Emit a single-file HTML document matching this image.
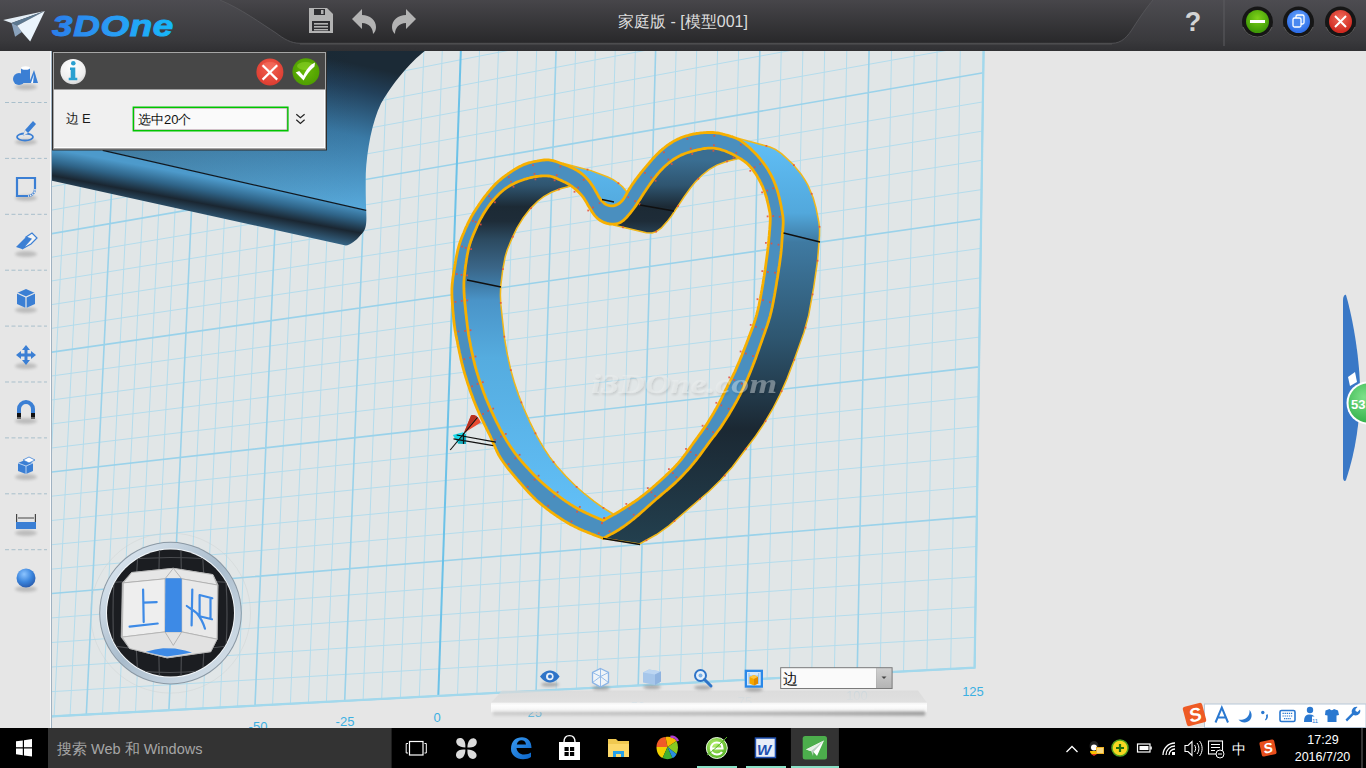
<!DOCTYPE html>
<html><head><meta charset="utf-8">
<style>
*{margin:0;padding:0;box-sizing:border-box}
html,body{width:1366px;height:768px;overflow:hidden;background:#e6e6e6;font-family:"Liberation Sans",sans-serif}
.abs{position:absolute;left:0;top:0;display:block}
</style></head><body>

<svg class="abs" width="1366" height="768" viewBox="0 0 1366 768">
<defs>
  <clipPath id="vp"><rect x="52" y="50" width="1314" height="678"/></clipPath>
  <path id="ho" d="M603.1 538.4 601.7 537.8 600.3 537.3 598.9 536.7 597.5 536.2 596.1 535.7 594.7 535.1 593.3 534.6 591.9 534.0 590.5 533.5 589.1 532.9 587.7 532.4 586.3 531.8 584.9 531.2 583.5 530.7 582.2 530.1 580.8 529.5 579.4 528.9 578.0 528.2 576.7 527.6 575.3 526.9 574.0 526.3 572.6 525.6 571.3 524.9 570.0 524.2 568.7 523.4 567.4 522.7 566.1 521.9 564.8 521.1 563.5 520.4 562.3 519.6 561.0 518.8 559.7 517.9 558.5 517.1 557.2 516.3 556.0 515.4 554.7 514.6 553.5 513.7 552.3 512.8 551.1 512.0 549.9 511.1 548.7 510.2 547.5 509.3 546.3 508.4 545.1 507.4 543.9 506.5 542.7 505.6 541.6 504.6 540.4 503.6 539.3 502.7 538.1 501.7 537.0 500.7 535.9 499.7 534.8 498.6 533.7 497.6 532.7 496.5 531.6 495.5 530.6 494.4 529.5 493.3 528.5 492.2 527.5 491.1 526.5 490.0 525.4 488.9 524.5 487.8 523.5 486.6 522.5 485.5 521.5 484.4 520.5 483.2 519.5 482.1 518.6 481.0 517.6 479.8 516.6 478.7 515.6 477.5 514.6 476.4 513.7 475.2 512.7 474.1 511.7 472.9 510.8 471.8 509.8 470.6 508.9 469.5 507.9 468.3 507.0 467.1 506.1 465.9 505.2 464.7 504.3 463.5 503.4 462.3 502.6 461.0 501.7 459.8 500.9 458.5 500.1 457.3 499.4 456.0 498.6 454.7 497.9 453.3 497.2 452.0 496.6 450.6 496.0 449.3 495.4 447.9 494.8 446.5 494.2 445.1 493.6 443.8 493.0 442.4 492.4 441.0 491.8 439.6 491.2 438.3 490.6 436.9 489.9 435.5 489.3 434.2 488.6 432.8 488.0 431.5 487.3 430.1 486.6 428.8 486.0 427.4 485.3 426.1 484.6 424.7 484.0 423.4 483.3 422.0 482.7 420.7 482.0 419.3 481.4 418.0 480.7 416.6 480.1 415.3 479.4 413.9 478.8 412.5 478.2 411.2 477.6 409.8 477.0 408.4 476.4 407.0 475.8 405.6 475.3 404.2 474.7 402.8 474.2 401.4 473.6 400.0 473.1 398.6 472.6 397.2 472.1 395.8 471.5 394.4 471.0 393.0 470.5 391.6 470.0 390.2 469.5 388.7 469.1 387.3 468.6 385.9 468.1 384.5 467.6 383.0 467.2 381.6 466.7 380.2 466.3 378.7 465.8 377.3 465.4 375.9 464.9 374.4 464.5 373.0 464.1 371.5 463.7 370.1 463.3 368.6 462.9 367.2 462.5 365.7 462.2 364.3 461.8 362.8 461.5 361.4 461.1 359.9 460.8 358.4 460.5 357.0 460.2 355.5 459.9 354.0 459.5 352.6 459.2 351.1 458.9 349.6 458.6 348.1 458.3 346.7 458.0 345.2 457.7 343.7 457.5 342.2 457.2 340.8 456.8 339.3 456.5 337.8 456.2 336.4 455.9 334.9 455.7 333.4 455.4 331.9 455.1 330.5 454.9 329.0 454.7 327.5 454.5 326.0 454.3 324.5 454.1 323.0 453.9 321.5 453.8 320.0 453.6 318.5 453.5 317.0 453.3 315.5 453.2 314.0 453.1 312.5 452.9 311.1 452.8 309.6 452.7 308.1 452.6 306.6 452.5 305.1 452.4 303.6 452.3 302.1 452.2 300.6 452.1 299.1 452.0 297.6 452.0 296.1 451.9 294.6 451.9 293.1 451.9 291.6 451.9 290.1 451.9 288.6 452.0 287.1 452.1 285.6 452.2 284.1 452.4 282.6 452.6 281.1 452.7 279.6 452.9 278.1 453.1 276.6 453.4 275.1 453.6 273.6 453.8 272.1 454.0 270.7 454.3 269.2 454.5 267.7 454.8 266.2 455.0 264.7 455.3 263.2 455.5 261.8 455.8 260.3 456.0 258.8 456.3 257.3 456.6 255.9 456.9 254.4 457.2 252.9 457.5 251.4 457.9 250.0 458.2 248.5 458.6 247.1 459.0 245.6 459.4 244.2 459.9 242.8 460.4 241.3 460.9 239.9 461.4 238.5 462.0 237.1 462.5 235.7 463.1 234.3 463.7 233.0 464.3 231.6 464.8 230.2 465.4 228.8 466.0 227.4 466.7 226.1 467.3 224.7 467.9 223.3 468.6 222.0 469.3 220.6 470.0 219.3 470.7 218.0 471.4 216.7 472.2 215.4 472.9 214.1 473.7 212.8 474.5 211.5 475.3 210.3 476.1 209.0 476.9 207.7 477.8 206.5 478.6 205.2 479.4 204.0 480.3 202.8 481.2 201.5 482.0 200.3 482.9 199.1 483.8 197.9 484.7 196.7 485.6 195.5 486.6 194.3 487.5 193.1 488.5 192.0 489.4 190.8 490.4 189.7 491.4 188.5 492.4 187.4 493.4 186.3 494.4 185.2 495.5 184.1 496.5 183.1 497.6 182.1 498.7 181.0 499.9 180.1 501.0 179.1 502.2 178.1 503.4 177.2 504.6 176.3 505.8 175.4 507.0 174.6 508.2 173.7 509.5 172.8 510.7 172.0 512.0 171.2 513.2 170.3 514.5 169.5 515.8 168.8 517.1 168.0 518.4 167.2 519.7 166.5 521.0 165.9 522.4 165.2 523.8 164.6 525.1 164.1 526.6 163.6 528.0 163.1 529.4 162.7 530.9 162.4 532.4 162.0 533.8 161.7 535.3 161.4 536.8 161.2 538.3 160.9 539.7 160.6 541.2 160.4 542.7 160.2 544.2 160.0 545.7 159.9 547.2 159.9 548.6 159.9 550.1 160.1 551.6 160.3 553.0 160.7 554.5 161.1 555.9 161.5 557.3 162.0 558.7 162.5 560.1 163.1 561.6 163.6 563.0 164.1 564.4 164.7 565.8 165.2 567.2 165.8 568.5 166.3 569.9 166.9 571.3 167.5 572.7 168.1 574.0 168.8 575.3 169.5 576.7 170.2 577.9 171.0 579.2 171.8 580.4 172.7 581.6 173.6 582.8 174.5 583.9 175.5 585.0 176.5 586.1 177.6 587.1 178.7 588.1 179.8 589.0 180.9 590.0 182.1 590.8 183.3 591.7 184.6 592.5 185.8 593.4 187.1 594.1 188.4 594.9 189.7 595.6 191.0 596.4 192.3 597.1 193.6 597.8 194.9 598.5 196.2 599.3 197.5 600.1 198.8 601.0 200.0 602.0 201.1 603.0 202.1 604.1 203.1 605.3 204.0 606.6 204.7 607.9 205.3 609.3 205.7 610.7 205.9 612.2 205.9 613.6 205.8 615.0 205.4 616.4 204.9 617.7 204.3 619.0 203.5 620.1 202.6 621.2 201.7 622.3 200.6 623.2 199.4 624.0 198.2 624.8 196.9 625.5 195.6 626.3 194.3 627.0 193.0 627.7 191.7 628.5 190.4 629.3 189.1 630.1 187.9 630.9 186.6 631.7 185.3 632.5 184.1 633.4 182.9 634.3 181.6 635.1 180.4 636.0 179.2 636.9 178.0 637.8 176.8 638.7 175.6 639.7 174.4 640.6 173.2 641.5 172.1 642.5 170.9 643.5 169.7 644.4 168.6 645.4 167.4 646.3 166.3 647.3 165.1 648.3 164.0 649.3 162.8 650.2 161.7 651.2 160.6 652.2 159.4 653.2 158.3 654.2 157.2 655.2 156.1 656.3 155.0 657.3 154.0 658.4 152.9 659.5 151.9 660.6 150.9 661.8 149.9 662.9 148.9 664.1 148.0 665.2 147.0 666.4 146.1 667.6 145.2 668.9 144.3 670.1 143.5 671.4 142.7 672.6 141.9 673.9 141.1 675.2 140.4 676.6 139.7 677.9 139.1 679.3 138.5 680.7 137.9 682.1 137.3 683.5 136.8 684.9 136.3 686.3 135.9 687.8 135.5 689.2 135.1 690.7 134.7 692.1 134.3 693.6 134.0 695.1 133.8 696.6 133.5 698.1 133.3 699.5 133.1 701.0 132.9 702.5 132.8 704.0 132.7 705.5 132.6 707.0 132.5 708.5 132.5 710.0 132.4 711.5 132.5 713.0 132.5 714.5 132.6 716.0 132.8 717.5 133.0 719.0 133.2 720.4 133.5 721.9 133.9 723.3 134.3 724.8 134.7 726.2 135.0 727.7 135.4 729.1 135.8 730.6 136.3 732.0 136.7 733.4 137.2 734.8 137.7 736.2 138.3 737.6 138.9 738.9 139.6 740.2 140.4 741.4 141.2 742.7 142.1 743.9 143.0 745.0 143.9 746.2 144.8 747.4 145.8 748.5 146.8 749.6 147.8 750.7 148.8 751.8 149.9 752.9 150.9 753.9 152.0 755.0 153.0 756.0 154.1 757.1 155.2 758.1 156.3 759.0 157.5 760.0 158.6 760.9 159.8 761.9 161.0 762.8 162.2 763.7 163.4 764.6 164.6 765.4 165.8 766.3 167.1 767.1 168.3 767.9 169.6 768.7 170.9 769.4 172.2 770.2 173.5 770.9 174.8 771.6 176.1 772.2 177.5 772.9 178.8 773.5 180.2 774.1 181.6 774.6 183.0 775.2 184.4 775.7 185.8 776.2 187.2 776.7 188.6 777.2 190.0 777.6 191.5 778.0 192.9 778.5 194.4 778.8 195.8 779.2 197.3 779.5 198.7 779.9 200.2 780.2 201.7 780.5 203.1 780.8 204.6 781.1 206.1 781.4 207.6 781.6 209.0 781.9 210.5 782.2 212.0 782.4 213.5 782.7 215.0 782.9 216.4 783.0 217.9 783.1 219.4 783.2 220.9 783.2 222.4 783.2 223.9 783.1 225.4 783.0 226.9 782.9 228.4 782.8 229.9 782.7 231.4 782.5 232.9 782.4 234.4 782.3 235.9 782.2 237.4 782.1 238.9 782.0 240.4 781.9 241.9 781.8 243.4 781.7 244.9 781.6 246.4 781.5 247.9 781.3 249.4 781.2 250.9 781.0 252.4 780.9 253.9 780.7 255.4 780.5 256.9 780.3 258.4 780.1 259.8 779.9 261.3 779.7 262.8 779.5 264.3 779.3 265.8 779.0 267.3 778.8 268.8 778.6 270.3 778.4 271.7 778.1 273.2 777.9 274.7 777.7 276.2 777.5 277.7 777.2 279.2 777.0 280.6 776.7 282.1 776.5 283.6 776.3 285.1 776.0 286.6 775.8 288.1 775.5 289.5 775.2 291.0 775.0 292.5 774.7 294.0 774.5 295.5 774.2 296.9 773.9 298.4 773.6 299.9 773.4 301.4 773.1 302.8 772.8 304.3 772.5 305.8 772.2 307.3 771.8 308.7 771.5 310.2 771.2 311.7 770.8 313.1 770.4 314.6 770.1 316.0 769.7 317.5 769.2 318.9 768.8 320.4 768.4 321.8 767.9 323.2 767.5 324.7 767.0 326.1 766.5 327.5 766.0 328.9 765.5 330.3 765.0 331.8 764.5 333.2 764.0 334.6 763.5 336.0 763.0 337.4 762.5 338.8 762.0 340.3 761.5 341.7 761.0 343.1 760.5 344.5 760.0 345.9 759.5 347.4 759.0 348.8 758.5 350.2 758.0 351.6 757.5 353.0 757.0 354.4 756.5 355.8 756.0 357.2 755.5 358.7 754.9 360.1 754.4 361.5 753.9 362.9 753.3 364.3 752.8 365.7 752.2 367.1 751.7 368.5 751.1 369.9 750.6 371.3 750.0 372.7 749.4 374.1 748.9 375.4 748.3 376.8 747.7 378.2 747.1 379.6 746.5 381.0 745.9 382.3 745.3 383.7 744.6 385.1 744.0 386.4 743.4 387.8 742.7 389.2 742.1 390.5 741.4 391.9 740.8 393.2 740.1 394.6 739.4 395.9 738.7 397.2 738.0 398.6 737.3 399.9 736.6 401.2 735.9 402.5 735.1 403.8 734.4 405.1 733.7 406.4 732.9 407.7 732.1 409.0 731.4 410.3 730.6 411.6 729.8 412.9 729.1 414.2 728.3 415.5 727.5 416.8 726.7 418.0 725.9 419.3 725.1 420.6 724.3 421.8 723.5 423.1 722.6 424.4 721.8 425.6 721.0 426.9 720.1 428.1 719.2 429.3 718.3 430.5 717.4 431.7 716.5 432.9 715.6 434.1 714.7 435.3 713.8 436.5 712.8 437.7 711.9 438.8 711.0 440.0 710.1 441.2 709.2 442.4 708.3 443.7 707.4 444.9 706.5 446.1 705.7 447.3 704.8 448.5 703.9 449.7 703.0 450.9 702.1 452.2 701.2 453.4 700.3 454.6 699.4 455.8 698.5 457.0 697.6 458.2 696.7 459.4 695.8 460.5 694.8 461.7 693.9 462.9 692.9 464.0 691.9 465.2 691.0 466.3 690.0 467.5 689.0 468.6 688.0 469.7 687.0 470.8 686.0 471.9 684.9 473.0 683.9 474.1 682.9 475.2 681.8 476.3 680.8 477.4 679.7 478.4 678.6 479.5 677.6 480.5 676.5 481.6 675.4 482.6 674.3 483.6 673.2 484.6 672.1 485.6 670.9 486.6 669.8 487.6 668.7 488.6 667.5 489.6 666.4 490.6 665.2 491.5 664.1 492.5 662.9 493.5 661.8 494.4 660.7 495.4 659.5 496.4 658.4 497.4 657.2 498.3 656.1 499.3 655.0 500.3 653.8 501.3 652.7 502.3 651.6 503.3 650.5 504.3 649.3 505.3 648.2 506.3 647.1 507.3 646.0 508.3 644.9 509.3 643.7 510.3 642.6 511.3 641.5 512.3 640.4 513.3 639.2 514.3 638.1 515.3 636.9 516.2 635.8 517.2 634.6 518.1 633.5 519.1 632.3 520.0 631.1 521.0 629.9 521.9 628.7 522.8 627.5 523.7 626.3 524.6 625.1 525.5 623.9 526.4 622.6 527.2 621.4 528.0 620.1 528.9 618.9 529.7 617.6 530.4 616.3 531.2 615.0 532.0 613.7 532.7 612.4 533.4 611.0 534.1 609.7 534.9 608.4 535.6 607.1 536.3 605.8 537.0 604.4 537.7 603.1 538.4Z"/>
  <path id="hi" d="M603.1 520.5 601.7 519.9 600.4 519.3 599.0 518.7 597.6 518.1 596.2 517.5 594.8 516.9 593.5 516.3 592.1 515.7 590.7 515.1 589.4 514.4 588.0 513.8 586.6 513.2 585.3 512.5 583.9 511.9 582.6 511.2 581.2 510.6 579.9 509.9 578.6 509.2 577.3 508.4 575.9 507.7 574.7 506.9 573.4 506.2 572.1 505.4 570.8 504.6 569.6 503.8 568.3 502.9 567.0 502.1 565.8 501.3 564.6 500.4 563.3 499.6 562.1 498.7 560.9 497.8 559.7 496.9 558.5 496.0 557.3 495.1 556.1 494.2 554.9 493.3 553.7 492.4 552.5 491.5 551.3 490.5 550.2 489.6 549.0 488.6 547.9 487.7 546.7 486.7 545.6 485.7 544.4 484.7 543.3 483.7 542.2 482.7 541.1 481.7 540.0 480.7 538.9 479.7 537.8 478.6 536.7 477.6 535.7 476.5 534.6 475.4 533.6 474.4 532.5 473.3 531.5 472.2 530.4 471.1 529.4 470.0 528.4 468.9 527.4 467.8 526.4 466.7 525.4 465.6 524.4 464.5 523.4 463.3 522.4 462.2 521.4 461.1 520.4 459.9 519.5 458.8 518.5 457.6 517.6 456.4 516.7 455.2 515.7 454.1 514.8 452.9 513.9 451.6 513.1 450.4 512.2 449.2 511.4 448.0 510.5 446.7 509.7 445.5 508.9 444.2 508.1 442.9 507.3 441.7 506.5 440.4 505.7 439.1 505.0 437.8 504.2 436.5 503.5 435.2 502.8 433.9 502.1 432.5 501.3 431.2 500.6 429.9 499.9 428.6 499.2 427.2 498.6 425.9 497.9 424.5 497.2 423.2 496.5 421.9 495.9 420.5 495.2 419.2 494.6 417.8 493.9 416.5 493.3 415.1 492.7 413.7 492.0 412.4 491.4 411.0 490.8 409.6 490.2 408.3 489.6 406.9 489.0 405.5 488.4 404.1 487.8 402.7 487.2 401.3 486.7 400.0 486.1 398.6 485.5 397.2 485.0 395.8 484.5 394.4 483.9 393.0 483.4 391.6 482.9 390.1 482.4 388.7 481.9 387.3 481.4 385.9 480.9 384.5 480.4 383.1 479.9 381.6 479.4 380.2 479.0 378.8 478.5 377.4 478.1 375.9 477.6 374.5 477.2 373.1 476.7 371.6 476.3 370.2 475.9 368.7 475.5 367.3 475.1 365.8 474.7 364.4 474.4 362.9 474.0 361.5 473.7 360.0 473.3 358.5 473.0 357.1 472.7 355.6 472.4 354.1 472.0 352.7 471.7 351.2 471.4 349.7 471.1 348.3 470.8 346.8 470.5 345.3 470.3 343.8 470.0 342.4 469.7 340.9 469.4 339.4 469.1 337.9 468.9 336.5 468.6 335.0 468.4 333.5 468.2 332.0 468.0 330.5 467.8 329.0 467.6 327.5 467.4 326.0 467.2 324.6 467.1 323.1 466.9 321.6 466.7 320.1 466.5 318.6 466.4 317.1 466.2 315.6 466.0 314.1 465.8 312.6 465.7 311.1 465.5 309.6 465.4 308.1 465.2 306.6 465.1 305.1 464.9 303.6 464.8 302.2 464.7 300.7 464.6 299.2 464.4 297.7 464.3 296.2 464.2 294.7 464.1 293.2 464.0 291.7 464.0 290.2 463.9 288.7 463.9 287.2 463.9 285.7 463.9 284.2 463.9 282.7 464.0 281.2 464.1 279.7 464.2 278.2 464.3 276.7 464.5 275.2 464.6 273.7 464.8 272.2 465.0 270.7 465.2 269.2 465.3 267.7 465.5 266.2 465.7 264.7 466.0 263.3 466.2 261.8 466.4 260.3 466.6 258.8 466.9 257.3 467.1 255.8 467.4 254.4 467.7 252.9 468.0 251.4 468.3 249.9 468.6 248.5 469.0 247.0 469.4 245.6 469.8 244.1 470.3 242.7 470.7 241.3 471.3 239.9 471.8 238.5 472.4 237.1 472.9 235.7 473.5 234.3 474.1 232.9 474.7 231.5 475.3 230.2 475.9 228.8 476.5 227.4 477.1 226.0 477.7 224.7 478.4 223.3 479.0 222.0 479.7 220.6 480.4 219.3 481.1 218.0 481.9 216.7 482.6 215.4 483.4 214.1 484.2 212.8 485.0 211.5 485.8 210.3 486.6 209.0 487.5 207.8 488.3 206.5 489.2 205.3 490.1 204.1 491.0 202.9 492.0 201.8 492.9 200.6 493.9 199.5 494.9 198.4 495.9 197.2 496.9 196.2 498.0 195.1 499.0 194.0 500.1 193.0 501.2 192.0 502.4 191.0 503.5 190.0 504.7 189.1 505.9 188.2 507.2 187.4 508.4 186.6 509.7 185.8 511.0 185.1 512.3 184.4 513.7 183.7 515.0 183.0 516.4 182.4 517.8 181.8 519.2 181.2 520.6 180.7 522.0 180.2 523.4 179.7 524.8 179.2 526.2 178.8 527.7 178.3 529.1 178.0 530.6 177.6 532.0 177.3 533.5 177.0 535.0 176.7 536.5 176.5 538.0 176.3 539.5 176.1 541.0 176.0 542.5 175.9 543.9 175.9 545.4 175.9 546.9 175.9 548.4 176.0 549.9 176.2 551.4 176.5 552.8 176.9 554.2 177.4 555.6 177.9 557.0 178.5 558.3 179.2 559.7 179.8 561.1 180.4 562.4 181.0 563.8 181.7 565.1 182.3 566.5 183.0 567.8 183.7 569.1 184.5 570.3 185.3 571.6 186.2 572.8 187.0 573.9 188.0 575.1 188.9 576.3 189.9 577.4 190.9 578.5 191.9 579.5 193.0 580.6 194.1 581.5 195.2 582.5 196.3 583.4 197.5 584.2 198.8 585.0 200.0 585.8 201.3 586.6 202.6 587.3 203.9 588.0 205.2 588.8 206.5 589.6 207.8 590.4 209.1 591.2 210.4 592.0 211.6 592.8 212.9 593.7 214.1 594.6 215.3 595.5 216.4 596.6 217.5 597.6 218.5 598.8 219.4 600.0 220.3 601.3 221.1 602.6 221.8 604.0 222.4 605.4 222.9 606.8 223.4 608.2 223.7 609.7 224.0 611.2 224.2 612.6 224.2 614.1 224.2 615.6 224.0 617.0 223.7 618.4 223.3 619.8 222.7 621.1 222.0 622.3 221.2 623.5 220.3 624.6 219.3 625.7 218.2 626.7 217.2 627.7 216.0 628.7 214.9 629.6 213.8 630.6 212.6 631.5 211.4 632.5 210.2 633.4 209.0 634.3 207.8 635.1 206.6 636.0 205.4 636.8 204.1 637.6 202.9 638.4 201.6 639.2 200.3 640.1 199.1 640.9 197.8 641.7 196.6 642.5 195.3 643.3 194.0 644.1 192.8 645.0 191.5 645.8 190.3 646.6 189.0 647.5 187.8 648.3 186.5 649.2 185.3 650.0 184.1 650.9 182.8 651.8 181.6 652.7 180.4 653.6 179.2 654.5 178.0 655.4 176.8 656.3 175.6 657.2 174.5 658.2 173.3 659.2 172.2 660.2 171.0 661.2 169.9 662.2 168.9 663.3 167.8 664.4 166.8 665.5 165.8 666.6 164.8 667.8 163.8 668.9 162.8 670.1 161.9 671.3 161.0 672.5 160.1 673.7 159.3 675.0 158.5 676.3 157.7 677.6 156.9 678.9 156.2 680.3 155.6 681.6 154.9 683.0 154.4 684.4 153.8 685.8 153.3 687.2 152.8 688.6 152.3 690.1 151.9 691.5 151.5 693.0 151.1 694.4 150.7 695.9 150.3 697.3 149.9 698.8 149.6 700.3 149.3 701.7 149.0 703.2 148.7 704.7 148.5 706.2 148.3 707.7 148.2 709.2 148.1 710.7 148.1 712.2 148.1 713.6 148.2 715.1 148.4 716.6 148.6 718.1 148.9 719.5 149.2 721.0 149.6 722.4 150.1 723.8 150.5 725.3 151.0 726.7 151.6 728.0 152.2 729.4 152.8 730.8 153.4 732.1 154.0 733.5 154.7 734.8 155.4 736.1 156.2 737.4 156.9 738.7 157.7 740.0 158.4 741.3 159.2 742.5 160.1 743.7 160.9 745.0 161.8 746.1 162.7 747.3 163.7 748.4 164.7 749.4 165.8 750.4 166.9 751.4 168.0 752.4 169.2 753.3 170.4 754.1 171.6 755.0 172.8 755.8 174.1 756.6 175.3 757.4 176.6 758.1 177.9 758.9 179.2 759.6 180.5 760.3 181.9 761.0 183.2 761.6 184.6 762.3 185.9 762.9 187.3 763.4 188.7 764.0 190.1 764.5 191.5 765.0 192.9 765.5 194.3 765.9 195.8 766.4 197.2 766.8 198.6 767.1 200.1 767.5 201.6 767.8 203.0 768.2 204.5 768.5 206.0 768.8 207.4 769.1 208.9 769.4 210.4 769.7 211.8 770.0 213.3 770.1 214.8 770.2 216.3 770.3 217.8 770.3 219.3 770.2 220.8 770.2 222.3 770.1 223.8 770.0 225.3 769.9 226.7 769.8 228.2 769.7 229.7 769.5 231.2 769.4 232.7 769.3 234.2 769.2 235.7 769.0 237.2 768.9 238.7 768.8 240.2 768.6 241.7 768.5 243.2 768.3 244.7 768.2 246.2 768.0 247.7 767.8 249.2 767.7 250.7 767.5 252.2 767.3 253.7 767.1 255.2 766.9 256.6 766.7 258.1 766.5 259.6 766.3 261.1 766.1 262.6 765.9 264.1 765.7 265.6 765.5 267.1 765.3 268.5 765.1 270.0 764.8 271.5 764.6 273.0 764.4 274.5 764.2 276.0 763.9 277.5 763.7 278.9 763.4 280.4 763.2 281.9 763.0 283.4 762.7 284.9 762.5 286.4 762.2 287.8 762.0 289.3 761.7 290.8 761.4 292.3 761.2 293.7 760.9 295.2 760.6 296.7 760.4 298.2 760.1 299.7 759.8 301.1 759.5 302.6 759.2 304.1 758.9 305.5 758.5 307.0 758.2 308.5 757.9 309.9 757.5 311.4 757.1 312.8 756.8 314.3 756.4 315.7 756.0 317.2 755.5 318.6 755.1 320.1 754.6 321.5 754.2 322.9 753.7 324.3 753.2 325.8 752.7 327.2 752.1 328.6 751.6 330.0 751.1 331.4 750.5 332.8 750.0 334.2 749.5 335.6 748.9 337.0 748.4 338.4 747.9 339.8 747.3 341.2 746.8 342.6 746.3 344.0 745.7 345.4 745.2 346.8 744.6 348.2 744.1 349.6 743.5 351.0 743.0 352.4 742.4 353.8 741.9 355.2 741.3 356.6 740.7 358.0 740.1 359.4 739.6 360.8 739.0 362.1 738.4 363.5 737.8 364.9 737.2 366.3 736.6 367.7 736.0 369.0 735.4 370.4 734.8 371.8 734.1 373.1 733.5 374.5 732.8 375.9 732.2 377.2 731.5 378.5 730.8 379.9 730.1 381.2 729.4 382.5 728.7 383.9 728.0 385.2 727.4 386.5 726.7 387.9 726.0 389.2 725.3 390.6 724.7 391.9 724.0 393.3 723.3 394.6 722.7 396.0 722.0 397.3 721.4 398.7 720.7 400.0 720.0 401.3 719.3 402.7 718.6 404.0 717.9 405.3 717.2 406.6 716.5 408.0 715.7 409.3 715.0 410.6 714.2 411.9 713.5 413.2 712.7 414.5 712.0 415.8 711.2 417.0 710.4 418.3 709.6 419.6 708.8 420.9 708.0 422.2 707.2 423.4 706.4 424.7 705.6 425.9 704.7 427.2 703.9 428.4 703.0 429.7 702.1 430.9 701.3 432.1 700.4 433.3 699.5 434.5 698.6 435.7 697.7 437.0 696.8 438.2 696.0 439.4 695.1 440.6 694.2 441.8 693.3 443.0 692.5 444.3 691.6 445.5 690.7 446.7 689.9 447.9 689.0 449.2 688.1 450.4 687.2 451.6 686.4 452.8 685.5 454.0 684.6 455.2 683.7 456.4 682.7 457.6 681.8 458.8 680.9 460.0 679.9 461.1 678.9 462.3 678.0 463.4 676.9 464.5 675.9 465.6 674.9 466.7 673.9 467.8 672.8 468.9 671.7 469.9 670.7 471.0 669.6 472.0 668.5 473.1 667.4 474.1 666.3 475.1 665.2 476.2 664.1 477.2 663.0 478.2 661.9 479.2 660.8 480.2 659.7 481.2 658.6 482.2 657.5 483.2 656.3 484.2 655.2 485.2 654.1 486.2 652.9 487.2 651.8 488.2 650.7 489.2 649.5 490.1 648.4 491.1 647.2 492.0 646.0 493.0 644.9 494.0 643.7 494.9 642.5 495.8 641.3 496.7 640.1 497.6 638.9 498.5 637.7 499.4 636.5 500.3 635.2 501.1 634.0 502.0 632.7 502.8 631.5 503.6 630.2 504.5 629.0 505.3 627.7 506.1 626.5 506.9 625.2 507.7 624.0 508.6 622.7 509.3 621.4 510.1 620.1 510.9 618.8 511.7 617.5 512.4 616.2 513.2 614.9 513.9 613.6 514.6 612.3 515.4 611.0 516.1 609.7 516.8 608.4 517.6 607.0 518.3 605.7 519.0 604.4 519.8 603.1 520.5Z"/>
  <clipPath id="noTip"><path d="M0 0 H1366 V768 H0 Z M560 525 L641 546 L641 560 L560 560 Z" clip-rule="evenodd"/></clipPath>
  <clipPath id="cpHole"><use href="#hi"/></clipPath>


  <linearGradient id="gOut" gradientUnits="userSpaceOnUse" x1="0" y1="130" x2="0" y2="545">
    <stop offset="0" stop-color="#62c2fa"/>
    <stop offset="0.2" stop-color="#52a8dc"/>
    <stop offset="0.27" stop-color="#3f7aa2"/>
    <stop offset="0.5" stop-color="#2e5670"/>
    <stop offset="0.72" stop-color="#1b2833"/>
    <stop offset="1" stop-color="#23404f"/>
  </linearGradient>
  <linearGradient id="gIn" gradientUnits="userSpaceOnUse" x1="0" y1="160" x2="0" y2="520">
    <stop offset="0" stop-color="#3a6e92"/>
    <stop offset="0.07" stop-color="#2f5570"/>
    <stop offset="0.13" stop-color="#1c2a35"/>
    <stop offset="0.17" stop-color="#1e2c38"/>
    <stop offset="0.22" stop-color="#2c4a60"/>
    <stop offset="0.3" stop-color="#3a6688"/>
    <stop offset="0.34" stop-color="#3e78a2"/>
    <stop offset="0.39" stop-color="#4a94c8"/>
    <stop offset="0.55" stop-color="#55acdf"/>
    <stop offset="1" stop-color="#62c0f8"/>
  </linearGradient>
  <linearGradient id="gTopObj" gradientUnits="userSpaceOnUse" x1="343" y1="206" x2="374" y2="68">
    <stop offset="0" stop-color="#58aadc"/>
    <stop offset="0.5" stop-color="#3a7aa6"/>
    <stop offset="0.83" stop-color="#22405a"/>
    <stop offset="1" stop-color="#1b2a36"/>
  </linearGradient>
  <linearGradient id="gTopDark" gradientUnits="userSpaceOnUse" x1="360" y1="0" x2="80" y2="0">
    <stop offset="0" stop-color="#101820" stop-opacity="0"/>
    <stop offset="1" stop-color="#101820" stop-opacity="0.35"/>
  </linearGradient>
  <linearGradient id="gCyl" gradientUnits="userSpaceOnUse" x1="230" y1="182" x2="222" y2="225">
    <stop offset="0" stop-color="#4d9acb"/>
    <stop offset="0.3" stop-color="#2f6488"/>
    <stop offset="0.6" stop-color="#1a2631"/>
    <stop offset="1" stop-color="#3a6f94"/>
  </linearGradient>
  <filter id="wmShadow" x="-10%" y="-50%" width="120%" height="200%"><feGaussianBlur in="SourceAlpha" stdDeviation="1.2"/><feOffset dx="1" dy="1.5"/><feComponentTransfer><feFuncA type="linear" slope="0.3"/></feComponentTransfer><feMerge><feMergeNode/><feMergeNode in="SourceGraphic"/></feMerge></filter>
</defs>
<rect x="0" y="0" width="1366" height="768" fill="#e6e6e6"/>
<g clip-path="url(#vp)">
<polygon points="-213.7,730.4 974.6,667.7 988.3,-271.4 -170.7,8.9" fill="#e1e6e7"/>
<path d="M-199.8 729.7L-157.0 5.6M-185.7 728.9L-143.2 2.3M-171.6 728.2L-129.3 -1.1M-157.3 727.4L-115.3 -4.5M-128.5 725.9L-86.9 -11.3M-113.9 725.1L-72.6 -14.8M-99.2 724.4L-58.2 -18.3M-84.4 723.6L-43.6 -21.8M-54.4 722.0L-14.2 -28.9M-39.3 721.2L0.7 -32.5M-24.0 720.4L15.6 -36.1M-8.6 719.6L30.7 -39.8M22.5 717.9L61.3 -47.2M38.3 717.1L76.7 -50.9M54.1 716.3L92.3 -54.7M70.1 715.4L108.0 -58.5M102.5 713.7L139.7 -66.2M118.9 712.9L155.7 -70.0M135.5 712.0L171.9 -73.9M152.1 711.1L188.2 -77.9M185.8 709.3L221.2 -85.9M202.9 708.4L237.9 -89.9M220.1 707.5L254.7 -94.0M237.5 706.6L271.7 -98.1M272.6 704.7L306.0 -106.4M290.4 703.8L323.4 -110.6M308.4 702.9L340.9 -114.8M326.4 701.9L358.6 -119.1M363.1 700.0L394.4 -127.8M381.7 699.0L412.5 -132.1M400.4 698.0L430.7 -136.5M419.3 697.0L449.1 -141.0M457.5 695.0L486.4 -150.0M476.9 694.0L505.3 -154.6M496.4 692.9L524.3 -159.2M516.2 691.9L543.5 -163.8M556.1 689.8L582.4 -173.2M576.4 688.7L602.1 -178.0M596.8 687.6L622.0 -182.8M617.4 686.5L642.1 -187.7M659.2 684.3L682.7 -197.5M680.4 683.2L703.2 -202.5M701.8 682.1L724.0 -207.5M723.4 681.0L745.0 -212.6M767.1 678.6L787.4 -222.8M789.3 677.5L808.9 -228.0M811.7 676.3L830.6 -233.3M834.3 675.1L852.6 -238.6M880.2 672.7L897.0 -249.3M903.5 671.5L919.5 -254.8M926.9 670.2L942.2 -260.3M950.7 669.0L965.2 -265.8M-212.3 707.2L975.0 637.3M-211.0 684.1L975.5 607.0M-209.6 661.1L975.9 576.7M-208.2 638.0L976.4 546.5M-205.5 592.1L977.3 486.4M-204.1 569.1L977.7 456.4M-202.8 546.3L978.1 426.5M-201.4 523.4L978.6 396.6M-198.7 477.9L979.4 337.1M-197.3 455.2L979.9 307.5M-196.0 432.5L980.3 277.9M-194.6 409.8L980.7 248.4M-191.9 364.7L981.6 189.6M-190.6 342.2L982.0 160.3M-189.2 319.7L982.4 131.1M-187.9 297.2L982.9 101.9M-185.2 252.4L983.7 43.8M-183.9 230.1L984.1 14.8M-182.6 207.8L984.6 -14.1M-181.3 185.6L985.0 -43.0M-178.6 141.2L985.8 -100.5M-177.3 119.1L986.3 -129.1M-176.0 97.0L986.7 -157.7M-174.7 74.9L987.1 -186.2M-172.0 30.9L987.9 -243.1M-170.7 8.9L988.3 -271.4" stroke="#b4dcec" stroke-width="1" fill="none"/>
<path d="M-213.7 730.4L-170.7 8.9M-143.0 726.7L-101.1 -7.9M-69.5 722.8L-29.0 -25.4M6.9 718.8L45.9 -43.5M86.3 714.6L123.8 -62.3M168.9 710.2L204.7 -81.9M255.0 705.7L288.8 -102.2M344.7 700.9L376.4 -123.4M536.1 690.8L562.9 -168.5M638.2 685.4L662.3 -192.6M745.2 679.8L766.1 -217.7M857.2 673.9L874.7 -243.9M974.6 667.7L988.3 -271.4M-213.7 730.4L974.6 667.7M-206.8 615.0L976.8 516.4M-200.0 500.6L979.0 366.9M-193.3 387.2L981.2 219.0M-186.6 274.8L983.3 72.8M-179.9 163.4L985.4 -71.8M-173.4 52.9L987.5 -214.7" stroke="#9ad2ea" stroke-width="1.6" fill="none"/>
<path d="M438.3 696.0L467.7 -145.5" stroke="#6cc2e8" stroke-width="2" fill="none"/>
<path d="M-213.7 730.4L974.6 667.7L988.3 -271.4" stroke="#a2d8ec" stroke-width="2.2" fill="none"/>

<path d="M40 40 L428 40 L424.8 50.9 C410 62 392 84 381 103.6 C372 122 367 150 365.7 173.8 C365.5 190 366 205 366.2 210.4 L102.7 150.4 L40 136 Z" fill="url(#gTopObj)"/>
<path d="M40 40 L428 40 L424.8 50.9 C410 62 392 84 381 103.6 C372 122 367 150 365.7 173.8 C365.5 190 366 205 366.2 210.4 L102.7 150.4 L40 136 Z" fill="url(#gTopDark)"/>
<path d="M40 136 L102.7 150.4 L366.2 210.4 C366.6 222 367 230 360.4 235.3 C356 241 350 245 345.8 245.6 L40 178 Z" fill="url(#gCyl)"/>
<path d="M102.7 150.4 L366.2 210.4" stroke="#101820" stroke-width="1.2"/>
<path d="M603.1 538.4 639.6 543.9 651.5 537.5 659.1 532.8 667.6 526.7 676.9 519.1 713.0 487.7 723.5 477.1 732.3 466.9 754.8 437.2 763.2 424.8 775.2 404.2 784.8 384.1 792.5 364.7 803.0 335.3 806.2 325.3 808.3 316.7 812.5 294.8 817.0 265.4 818.4 250.6 819.6 234.3 819.6 228.3 817.6 215.1 814.5 202.1 810.6 190.9 805.9 181.6 799.3 171.7 791.5 162.6 780.4 152.7 776.7 150.1 772.7 148.1 764.2 145.2 717.5 133.0 711.5 132.5 702.5 132.8 693.6 134.0 686.3 135.9 679.3 138.5 672.6 141.9 665.2 147.0 658.4 152.9 651.2 160.6 639.7 174.4 632.5 184.1 627.3 192.5 621.5 185.9 614.4 180.4 606.4 176.4 591.0 170.6 550.1 160.1 547.2 159.9 542.7 160.2 529.4 162.7 521.0 165.9 513.2 170.3 502.2 178.1 494.4 185.2 486.6 194.3 477.8 206.5 470.7 218.0 465.4 228.8 461.4 238.5 459.0 245.6 456.9 254.4 454.8 266.2 452.0 287.1 451.9 294.6 452.6 306.6 455.1 330.5 462.2 364.3 465.4 375.9 469.5 388.7 474.2 401.4 478.8 412.5 490.6 436.9 496.6 450.6 500.9 458.5 505.2 464.7 511.7 472.9 524.5 487.8 532.7 496.5 540.4 503.6 548.7 510.2 558.5 517.1 567.4 522.7 574.0 526.3 582.2 530.1 603.1 538.4ZM659.7 481.2 648.4 491.1 638.9 498.5 625.2 507.7 614.0 514.4 606.1 509.6 596.2 502.9 586.7 495.6 578.7 488.8 570.1 480.6 561.9 471.9 554.1 462.8 547.9 454.4 542.2 445.7 536.4 435.2 529.8 421.9 524.3 409.7 519.4 397.2 515.0 384.6 511.6 373.2 508.9 361.6 504.5 338.2 501.7 314.6 500.5 298.3 500.5 289.4 501.3 280.5 503.1 267.3 505.1 257.1 507.8 248.6 514.2 233.5 519.9 223.0 525.7 214.4 532.4 206.4 540.0 199.3 546.2 195.1 554.3 191.1 562.7 188.1 571.4 186.1 577.4 190.9 581.5 195.2 584.2 198.8 590.4 209.1 594.6 215.3 597.6 218.5 601.3 221.1 606.8 223.4 644.7 232.6 649.1 233.1 652.1 232.9 654.9 232.1 658.8 230.1 662.2 227.2 665.2 223.9 671.6 215.7 684.0 197.0 691.0 187.3 696.7 180.5 703.1 174.2 710.2 168.8 718.1 164.5 728.0 161.1 739.8 158.4 746.1 162.7 750.4 166.9 755.0 172.8 759.6 180.5 763.4 188.7 765.9 195.8 768.5 206.0 770.1 214.8 770.2 220.8 769.5 231.2 766.7 258.1 762.0 289.3 757.5 311.4 755.1 320.1 752.1 328.6 744.1 349.6 737.2 366.3 731.5 378.5 719.3 402.7 714.2 411.9 703.9 428.4 682.7 457.6 673.9 467.8 659.7 481.2Z" fill="url(#gOut)"/>
<path d="M603.1 520.5 614.0 514.4 603.5 508.0 592.6 500.2 582.1 491.8 573.2 483.7 563.9 474.1 554.1 462.8 547.9 454.4 541.5 444.4 530.4 423.3 521.0 401.4 513.2 378.9 507.9 357.2 505.4 344.1 504.1 335.3 501.4 311.7 500.4 295.3 500.8 285.0 502.7 270.2 504.8 258.5 507.2 250.0 513.6 234.9 519.1 224.3 526.6 213.2 534.5 204.2 542.4 197.5 550.2 193.0 561.3 188.5 571.6 186.2 563.8 181.7 555.6 177.9 551.4 176.5 546.9 175.9 542.5 175.9 532.0 177.3 522.0 180.2 511.0 185.1 503.5 190.0 496.9 196.2 489.2 205.3 481.9 216.7 476.5 227.4 470.3 242.7 468.0 251.4 466.0 263.3 464.3 276.7 463.9 287.2 464.9 303.6 467.8 329.0 471.7 351.2 474.7 364.4 478.5 377.4 483.4 391.6 489.0 405.5 495.9 420.5 503.5 435.2 509.7 445.5 516.7 455.2 526.4 466.7 536.7 477.6 546.7 486.7 557.3 495.1 568.3 502.9 577.3 508.4 586.6 513.2 603.1 520.5ZM739.8 158.4 730.8 153.4 723.8 150.5 718.1 148.9 712.2 148.1 704.7 148.5 697.3 149.9 687.2 152.8 678.9 156.2 673.7 159.3 668.9 162.8 663.3 167.8 659.2 172.2 649.2 185.3 634.3 207.8 628.7 214.9 624.6 219.3 621.1 222.0 617.0 223.7 612.6 224.2 608.3 223.7 646.2 232.8 652.1 232.9 656.3 231.6 661.1 228.2 667.1 221.6 671.6 215.7 684.0 197.0 690.1 188.5 695.7 181.6 702.0 175.2 709.0 169.6 716.8 165.1 726.6 161.5 739.8 158.4Z" fill="url(#gIn)"/>
<path d="M603.1 538.4 601.7 537.8 600.3 537.3 598.9 536.7 597.5 536.2 596.1 535.7 594.7 535.1 593.3 534.6 591.9 534.0 590.5 533.5 589.1 532.9 587.7 532.4 586.3 531.8 584.9 531.2 583.5 530.7 582.2 530.1 580.8 529.5 579.4 528.9 578.0 528.2 576.7 527.6 575.3 526.9 574.0 526.3 572.6 525.6 571.3 524.9 570.0 524.2 568.7 523.4 567.4 522.7 566.1 521.9 564.8 521.1 563.5 520.4 562.3 519.6 561.0 518.8 559.7 517.9 558.5 517.1 557.2 516.3 556.0 515.4 554.7 514.6 553.5 513.7 552.3 512.8 551.1 512.0 549.9 511.1 548.7 510.2 547.5 509.3 546.3 508.4 545.1 507.4 543.9 506.5 542.7 505.6 541.6 504.6 540.4 503.6 539.3 502.7 538.1 501.7 537.0 500.7 535.9 499.7 534.8 498.6 533.7 497.6 532.7 496.5 531.6 495.5 530.6 494.4 529.5 493.3 528.5 492.2 527.5 491.1 526.5 490.0 525.4 488.9 524.5 487.8 523.5 486.6 522.5 485.5 521.5 484.4 520.5 483.2 519.5 482.1 518.6 481.0 517.6 479.8 516.6 478.7 515.6 477.5 514.6 476.4 513.7 475.2 512.7 474.1 511.7 472.9 510.8 471.8 509.8 470.6 508.9 469.5 507.9 468.3 507.0 467.1 506.1 465.9 505.2 464.7 504.3 463.5 503.4 462.3 502.6 461.0 501.7 459.8 500.9 458.5 500.1 457.3 499.4 456.0 498.6 454.7 497.9 453.3 497.2 452.0 496.6 450.6 496.0 449.3 495.4 447.9 494.8 446.5 494.2 445.1 493.6 443.8 493.0 442.4 492.4 441.0 491.8 439.6 491.2 438.3 490.6 436.9 489.9 435.5 489.3 434.2 488.6 432.8 488.0 431.5 487.3 430.1 486.6 428.8 486.0 427.4 485.3 426.1 484.6 424.7 484.0 423.4 483.3 422.0 482.7 420.7 482.0 419.3 481.4 418.0 480.7 416.6 480.1 415.3 479.4 413.9 478.8 412.5 478.2 411.2 477.6 409.8 477.0 408.4 476.4 407.0 475.8 405.6 475.3 404.2 474.7 402.8 474.2 401.4 473.6 400.0 473.1 398.6 472.6 397.2 472.1 395.8 471.5 394.4 471.0 393.0 470.5 391.6 470.0 390.2 469.5 388.7 469.1 387.3 468.6 385.9 468.1 384.5 467.6 383.0 467.2 381.6 466.7 380.2 466.3 378.7 465.8 377.3 465.4 375.9 464.9 374.4 464.5 373.0 464.1 371.5 463.7 370.1 463.3 368.6 462.9 367.2 462.5 365.7 462.2 364.3 461.8 362.8 461.5 361.4 461.1 359.9 460.8 358.4 460.5 357.0 460.2 355.5 459.9 354.0 459.5 352.6 459.2 351.1 458.9 349.6 458.6 348.1 458.3 346.7 458.0 345.2 457.7 343.7 457.5 342.2 457.2 340.8 456.8 339.3 456.5 337.8 456.2 336.4 455.9 334.9 455.7 333.4 455.4 331.9 455.1 330.5 454.9 329.0 454.7 327.5 454.5 326.0 454.3 324.5 454.1 323.0 453.9 321.5 453.8 320.0 453.6 318.5 453.5 317.0 453.3 315.5 453.2 314.0 453.1 312.5 452.9 311.1 452.8 309.6 452.7 308.1 452.6 306.6 452.5 305.1 452.4 303.6 452.3 302.1 452.2 300.6 452.1 299.1 452.0 297.6 452.0 296.1 451.9 294.6 451.9 293.1 451.9 291.6 451.9 290.1 451.9 288.6 452.0 287.1 452.1 285.6 452.2 284.1 452.4 282.6 452.6 281.1 452.7 279.6 452.9 278.1 453.1 276.6 453.4 275.1 453.6 273.6 453.8 272.1 454.0 270.7 454.3 269.2 454.5 267.7 454.8 266.2 455.0 264.7 455.3 263.2 455.5 261.8 455.8 260.3 456.0 258.8 456.3 257.3 456.6 255.9 456.9 254.4 457.2 252.9 457.5 251.4 457.9 250.0 458.2 248.5 458.6 247.1 459.0 245.6 459.4 244.2 459.9 242.8 460.4 241.3 460.9 239.9 461.4 238.5 462.0 237.1 462.5 235.7 463.1 234.3 463.7 233.0 464.3 231.6 464.8 230.2 465.4 228.8 466.0 227.4 466.7 226.1 467.3 224.7 467.9 223.3 468.6 222.0 469.3 220.6 470.0 219.3 470.7 218.0 471.4 216.7 472.2 215.4 472.9 214.1 473.7 212.8 474.5 211.5 475.3 210.3 476.1 209.0 476.9 207.7 477.8 206.5 478.6 205.2 479.4 204.0 480.3 202.8 481.2 201.5 482.0 200.3 482.9 199.1 483.8 197.9 484.7 196.7 485.6 195.5 486.6 194.3 487.5 193.1 488.5 192.0 489.4 190.8 490.4 189.7 491.4 188.5 492.4 187.4 493.4 186.3 494.4 185.2 495.5 184.1 496.5 183.1 497.6 182.1 498.7 181.0 499.9 180.1 501.0 179.1 502.2 178.1 503.4 177.2 504.6 176.3 505.8 175.4 507.0 174.6 508.2 173.7 509.5 172.8 510.7 172.0 512.0 171.2 513.2 170.3 514.5 169.5 515.8 168.8 517.1 168.0 518.4 167.2 519.7 166.5 521.0 165.9 522.4 165.2 523.8 164.6 525.1 164.1 526.6 163.6 528.0 163.1 529.4 162.7 530.9 162.4 532.4 162.0 533.8 161.7 535.3 161.4 536.8 161.2 538.3 160.9 539.7 160.6 541.2 160.4 542.7 160.2 544.2 160.0 545.7 159.9 547.2 159.9 548.6 159.9 550.1 160.1 551.6 160.3 553.0 160.7 554.5 161.1 555.9 161.5 557.3 162.0 558.7 162.5 560.1 163.1 561.6 163.6 563.0 164.1 564.4 164.7 565.8 165.2 567.2 165.8 568.5 166.3 569.9 166.9 571.3 167.5 572.7 168.1 574.0 168.8 575.3 169.5 576.7 170.2 577.9 171.0 579.2 171.8 580.4 172.7 581.6 173.6 582.8 174.5 583.9 175.5 585.0 176.5 586.1 177.6 587.1 178.7 588.1 179.8 589.0 180.9 590.0 182.1 590.8 183.3 591.7 184.6 592.5 185.8 593.4 187.1 594.1 188.4 594.9 189.7 595.6 191.0 596.4 192.3 597.1 193.6 597.8 194.9 598.5 196.2 599.3 197.5 600.1 198.8 601.0 200.0 602.0 201.1 603.0 202.1 604.1 203.1 605.3 204.0 606.6 204.7 607.9 205.3 609.3 205.7 610.7 205.9 612.2 205.9 613.6 205.8 615.0 205.4 616.4 204.9 617.7 204.3 619.0 203.5 620.1 202.6 621.2 201.7 622.3 200.6 623.2 199.4 624.0 198.2 624.8 196.9 625.5 195.6 626.3 194.3 627.0 193.0 627.7 191.7 628.5 190.4 629.3 189.1 630.1 187.9 630.9 186.6 631.7 185.3 632.5 184.1 633.4 182.9 634.3 181.6 635.1 180.4 636.0 179.2 636.9 178.0 637.8 176.8 638.7 175.6 639.7 174.4 640.6 173.2 641.5 172.1 642.5 170.9 643.5 169.7 644.4 168.6 645.4 167.4 646.3 166.3 647.3 165.1 648.3 164.0 649.3 162.8 650.2 161.7 651.2 160.6 652.2 159.4 653.2 158.3 654.2 157.2 655.2 156.1 656.3 155.0 657.3 154.0 658.4 152.9 659.5 151.9 660.6 150.9 661.8 149.9 662.9 148.9 664.1 148.0 665.2 147.0 666.4 146.1 667.6 145.2 668.9 144.3 670.1 143.5 671.4 142.7 672.6 141.9 673.9 141.1 675.2 140.4 676.6 139.7 677.9 139.1 679.3 138.5 680.7 137.9 682.1 137.3 683.5 136.8 684.9 136.3 686.3 135.9 687.8 135.5 689.2 135.1 690.7 134.7 692.1 134.3 693.6 134.0 695.1 133.8 696.6 133.5 698.1 133.3 699.5 133.1 701.0 132.9 702.5 132.8 704.0 132.7 705.5 132.6 707.0 132.5 708.5 132.5 710.0 132.4 711.5 132.5 713.0 132.5 714.5 132.6 716.0 132.8 717.5 133.0 719.0 133.2 720.4 133.5 721.9 133.9 723.3 134.3 724.8 134.7 726.2 135.0 727.7 135.4 729.1 135.8 730.6 136.3 732.0 136.7 733.4 137.2 734.8 137.7 736.2 138.3 737.6 138.9 738.9 139.6 740.2 140.4 741.4 141.2 742.7 142.1 743.9 143.0 745.0 143.9 746.2 144.8 747.4 145.8 748.5 146.8 749.6 147.8 750.7 148.8 751.8 149.9 752.9 150.9 753.9 152.0 755.0 153.0 756.0 154.1 757.1 155.2 758.1 156.3 759.0 157.5 760.0 158.6 760.9 159.8 761.9 161.0 762.8 162.2 763.7 163.4 764.6 164.6 765.4 165.8 766.3 167.1 767.1 168.3 767.9 169.6 768.7 170.9 769.4 172.2 770.2 173.5 770.9 174.8 771.6 176.1 772.2 177.5 772.9 178.8 773.5 180.2 774.1 181.6 774.6 183.0 775.2 184.4 775.7 185.8 776.2 187.2 776.7 188.6 777.2 190.0 777.6 191.5 778.0 192.9 778.5 194.4 778.8 195.8 779.2 197.3 779.5 198.7 779.9 200.2 780.2 201.7 780.5 203.1 780.8 204.6 781.1 206.1 781.4 207.6 781.6 209.0 781.9 210.5 782.2 212.0 782.4 213.5 782.7 215.0 782.9 216.4 783.0 217.9 783.1 219.4 783.2 220.9 783.2 222.4 783.2 223.9 783.1 225.4 783.0 226.9 782.9 228.4 782.8 229.9 782.7 231.4 782.5 232.9 782.4 234.4 782.3 235.9 782.2 237.4 782.1 238.9 782.0 240.4 781.9 241.9 781.8 243.4 781.7 244.9 781.6 246.4 781.5 247.9 781.3 249.4 781.2 250.9 781.0 252.4 780.9 253.9 780.7 255.4 780.5 256.9 780.3 258.4 780.1 259.8 779.9 261.3 779.7 262.8 779.5 264.3 779.3 265.8 779.0 267.3 778.8 268.8 778.6 270.3 778.4 271.7 778.1 273.2 777.9 274.7 777.7 276.2 777.5 277.7 777.2 279.2 777.0 280.6 776.7 282.1 776.5 283.6 776.3 285.1 776.0 286.6 775.8 288.1 775.5 289.5 775.2 291.0 775.0 292.5 774.7 294.0 774.5 295.5 774.2 296.9 773.9 298.4 773.6 299.9 773.4 301.4 773.1 302.8 772.8 304.3 772.5 305.8 772.2 307.3 771.8 308.7 771.5 310.2 771.2 311.7 770.8 313.1 770.4 314.6 770.1 316.0 769.7 317.5 769.2 318.9 768.8 320.4 768.4 321.8 767.9 323.2 767.5 324.7 767.0 326.1 766.5 327.5 766.0 328.9 765.5 330.3 765.0 331.8 764.5 333.2 764.0 334.6 763.5 336.0 763.0 337.4 762.5 338.8 762.0 340.3 761.5 341.7 761.0 343.1 760.5 344.5 760.0 345.9 759.5 347.4 759.0 348.8 758.5 350.2 758.0 351.6 757.5 353.0 757.0 354.4 756.5 355.8 756.0 357.2 755.5 358.7 754.9 360.1 754.4 361.5 753.9 362.9 753.3 364.3 752.8 365.7 752.2 367.1 751.7 368.5 751.1 369.9 750.6 371.3 750.0 372.7 749.4 374.1 748.9 375.4 748.3 376.8 747.7 378.2 747.1 379.6 746.5 381.0 745.9 382.3 745.3 383.7 744.6 385.1 744.0 386.4 743.4 387.8 742.7 389.2 742.1 390.5 741.4 391.9 740.8 393.2 740.1 394.6 739.4 395.9 738.7 397.2 738.0 398.6 737.3 399.9 736.6 401.2 735.9 402.5 735.1 403.8 734.4 405.1 733.7 406.4 732.9 407.7 732.1 409.0 731.4 410.3 730.6 411.6 729.8 412.9 729.1 414.2 728.3 415.5 727.5 416.8 726.7 418.0 725.9 419.3 725.1 420.6 724.3 421.8 723.5 423.1 722.6 424.4 721.8 425.6 721.0 426.9 720.1 428.1 719.2 429.3 718.3 430.5 717.4 431.7 716.5 432.9 715.6 434.1 714.7 435.3 713.8 436.5 712.8 437.7 711.9 438.8 711.0 440.0 710.1 441.2 709.2 442.4 708.3 443.7 707.4 444.9 706.5 446.1 705.7 447.3 704.8 448.5 703.9 449.7 703.0 450.9 702.1 452.2 701.2 453.4 700.3 454.6 699.4 455.8 698.5 457.0 697.6 458.2 696.7 459.4 695.8 460.5 694.8 461.7 693.9 462.9 692.9 464.0 691.9 465.2 691.0 466.3 690.0 467.5 689.0 468.6 688.0 469.7 687.0 470.8 686.0 471.9 684.9 473.0 683.9 474.1 682.9 475.2 681.8 476.3 680.8 477.4 679.7 478.4 678.6 479.5 677.6 480.5 676.5 481.6 675.4 482.6 674.3 483.6 673.2 484.6 672.1 485.6 670.9 486.6 669.8 487.6 668.7 488.6 667.5 489.6 666.4 490.6 665.2 491.5 664.1 492.5 662.9 493.5 661.8 494.4 660.7 495.4 659.5 496.4 658.4 497.4 657.2 498.3 656.1 499.3 655.0 500.3 653.8 501.3 652.7 502.3 651.6 503.3 650.5 504.3 649.3 505.3 648.2 506.3 647.1 507.3 646.0 508.3 644.9 509.3 643.7 510.3 642.6 511.3 641.5 512.3 640.4 513.3 639.2 514.3 638.1 515.3 636.9 516.2 635.8 517.2 634.6 518.1 633.5 519.1 632.3 520.0 631.1 521.0 629.9 521.9 628.7 522.8 627.5 523.7 626.3 524.6 625.1 525.5 623.9 526.4 622.6 527.2 621.4 528.0 620.1 528.9 618.9 529.7 617.6 530.4 616.3 531.2 615.0 532.0 613.7 532.7 612.4 533.4 611.0 534.1 609.7 534.9 608.4 535.6 607.1 536.3 605.8 537.0 604.4 537.7 603.1 538.4Z M603.1 520.5 601.7 519.9 600.4 519.3 599.0 518.7 597.6 518.1 596.2 517.5 594.8 516.9 593.5 516.3 592.1 515.7 590.7 515.1 589.4 514.4 588.0 513.8 586.6 513.2 585.3 512.5 583.9 511.9 582.6 511.2 581.2 510.6 579.9 509.9 578.6 509.2 577.3 508.4 575.9 507.7 574.7 506.9 573.4 506.2 572.1 505.4 570.8 504.6 569.6 503.8 568.3 502.9 567.0 502.1 565.8 501.3 564.6 500.4 563.3 499.6 562.1 498.7 560.9 497.8 559.7 496.9 558.5 496.0 557.3 495.1 556.1 494.2 554.9 493.3 553.7 492.4 552.5 491.5 551.3 490.5 550.2 489.6 549.0 488.6 547.9 487.7 546.7 486.7 545.6 485.7 544.4 484.7 543.3 483.7 542.2 482.7 541.1 481.7 540.0 480.7 538.9 479.7 537.8 478.6 536.7 477.6 535.7 476.5 534.6 475.4 533.6 474.4 532.5 473.3 531.5 472.2 530.4 471.1 529.4 470.0 528.4 468.9 527.4 467.8 526.4 466.7 525.4 465.6 524.4 464.5 523.4 463.3 522.4 462.2 521.4 461.1 520.4 459.9 519.5 458.8 518.5 457.6 517.6 456.4 516.7 455.2 515.7 454.1 514.8 452.9 513.9 451.6 513.1 450.4 512.2 449.2 511.4 448.0 510.5 446.7 509.7 445.5 508.9 444.2 508.1 442.9 507.3 441.7 506.5 440.4 505.7 439.1 505.0 437.8 504.2 436.5 503.5 435.2 502.8 433.9 502.1 432.5 501.3 431.2 500.6 429.9 499.9 428.6 499.2 427.2 498.6 425.9 497.9 424.5 497.2 423.2 496.5 421.9 495.9 420.5 495.2 419.2 494.6 417.8 493.9 416.5 493.3 415.1 492.7 413.7 492.0 412.4 491.4 411.0 490.8 409.6 490.2 408.3 489.6 406.9 489.0 405.5 488.4 404.1 487.8 402.7 487.2 401.3 486.7 400.0 486.1 398.6 485.5 397.2 485.0 395.8 484.5 394.4 483.9 393.0 483.4 391.6 482.9 390.1 482.4 388.7 481.9 387.3 481.4 385.9 480.9 384.5 480.4 383.1 479.9 381.6 479.4 380.2 479.0 378.8 478.5 377.4 478.1 375.9 477.6 374.5 477.2 373.1 476.7 371.6 476.3 370.2 475.9 368.7 475.5 367.3 475.1 365.8 474.7 364.4 474.4 362.9 474.0 361.5 473.7 360.0 473.3 358.5 473.0 357.1 472.7 355.6 472.4 354.1 472.0 352.7 471.7 351.2 471.4 349.7 471.1 348.3 470.8 346.8 470.5 345.3 470.3 343.8 470.0 342.4 469.7 340.9 469.4 339.4 469.1 337.9 468.9 336.5 468.6 335.0 468.4 333.5 468.2 332.0 468.0 330.5 467.8 329.0 467.6 327.5 467.4 326.0 467.2 324.6 467.1 323.1 466.9 321.6 466.7 320.1 466.5 318.6 466.4 317.1 466.2 315.6 466.0 314.1 465.8 312.6 465.7 311.1 465.5 309.6 465.4 308.1 465.2 306.6 465.1 305.1 464.9 303.6 464.8 302.2 464.7 300.7 464.6 299.2 464.4 297.7 464.3 296.2 464.2 294.7 464.1 293.2 464.0 291.7 464.0 290.2 463.9 288.7 463.9 287.2 463.9 285.7 463.9 284.2 463.9 282.7 464.0 281.2 464.1 279.7 464.2 278.2 464.3 276.7 464.5 275.2 464.6 273.7 464.8 272.2 465.0 270.7 465.2 269.2 465.3 267.7 465.5 266.2 465.7 264.7 466.0 263.3 466.2 261.8 466.4 260.3 466.6 258.8 466.9 257.3 467.1 255.8 467.4 254.4 467.7 252.9 468.0 251.4 468.3 249.9 468.6 248.5 469.0 247.0 469.4 245.6 469.8 244.1 470.3 242.7 470.7 241.3 471.3 239.9 471.8 238.5 472.4 237.1 472.9 235.7 473.5 234.3 474.1 232.9 474.7 231.5 475.3 230.2 475.9 228.8 476.5 227.4 477.1 226.0 477.7 224.7 478.4 223.3 479.0 222.0 479.7 220.6 480.4 219.3 481.1 218.0 481.9 216.7 482.6 215.4 483.4 214.1 484.2 212.8 485.0 211.5 485.8 210.3 486.6 209.0 487.5 207.8 488.3 206.5 489.2 205.3 490.1 204.1 491.0 202.9 492.0 201.8 492.9 200.6 493.9 199.5 494.9 198.4 495.9 197.2 496.9 196.2 498.0 195.1 499.0 194.0 500.1 193.0 501.2 192.0 502.4 191.0 503.5 190.0 504.7 189.1 505.9 188.2 507.2 187.4 508.4 186.6 509.7 185.8 511.0 185.1 512.3 184.4 513.7 183.7 515.0 183.0 516.4 182.4 517.8 181.8 519.2 181.2 520.6 180.7 522.0 180.2 523.4 179.7 524.8 179.2 526.2 178.8 527.7 178.3 529.1 178.0 530.6 177.6 532.0 177.3 533.5 177.0 535.0 176.7 536.5 176.5 538.0 176.3 539.5 176.1 541.0 176.0 542.5 175.9 543.9 175.9 545.4 175.9 546.9 175.9 548.4 176.0 549.9 176.2 551.4 176.5 552.8 176.9 554.2 177.4 555.6 177.9 557.0 178.5 558.3 179.2 559.7 179.8 561.1 180.4 562.4 181.0 563.8 181.7 565.1 182.3 566.5 183.0 567.8 183.7 569.1 184.5 570.3 185.3 571.6 186.2 572.8 187.0 573.9 188.0 575.1 188.9 576.3 189.9 577.4 190.9 578.5 191.9 579.5 193.0 580.6 194.1 581.5 195.2 582.5 196.3 583.4 197.5 584.2 198.8 585.0 200.0 585.8 201.3 586.6 202.6 587.3 203.9 588.0 205.2 588.8 206.5 589.6 207.8 590.4 209.1 591.2 210.4 592.0 211.6 592.8 212.9 593.7 214.1 594.6 215.3 595.5 216.4 596.6 217.5 597.6 218.5 598.8 219.4 600.0 220.3 601.3 221.1 602.6 221.8 604.0 222.4 605.4 222.9 606.8 223.4 608.2 223.7 609.7 224.0 611.2 224.2 612.6 224.2 614.1 224.2 615.6 224.0 617.0 223.7 618.4 223.3 619.8 222.7 621.1 222.0 622.3 221.2 623.5 220.3 624.6 219.3 625.7 218.2 626.7 217.2 627.7 216.0 628.7 214.9 629.6 213.8 630.6 212.6 631.5 211.4 632.5 210.2 633.4 209.0 634.3 207.8 635.1 206.6 636.0 205.4 636.8 204.1 637.6 202.9 638.4 201.6 639.2 200.3 640.1 199.1 640.9 197.8 641.7 196.6 642.5 195.3 643.3 194.0 644.1 192.8 645.0 191.5 645.8 190.3 646.6 189.0 647.5 187.8 648.3 186.5 649.2 185.3 650.0 184.1 650.9 182.8 651.8 181.6 652.7 180.4 653.6 179.2 654.5 178.0 655.4 176.8 656.3 175.6 657.2 174.5 658.2 173.3 659.2 172.2 660.2 171.0 661.2 169.9 662.2 168.9 663.3 167.8 664.4 166.8 665.5 165.8 666.6 164.8 667.8 163.8 668.9 162.8 670.1 161.9 671.3 161.0 672.5 160.1 673.7 159.3 675.0 158.5 676.3 157.7 677.6 156.9 678.9 156.2 680.3 155.6 681.6 154.9 683.0 154.4 684.4 153.8 685.8 153.3 687.2 152.8 688.6 152.3 690.1 151.9 691.5 151.5 693.0 151.1 694.4 150.7 695.9 150.3 697.3 149.9 698.8 149.6 700.3 149.3 701.7 149.0 703.2 148.7 704.7 148.5 706.2 148.3 707.7 148.2 709.2 148.1 710.7 148.1 712.2 148.1 713.6 148.2 715.1 148.4 716.6 148.6 718.1 148.9 719.5 149.2 721.0 149.6 722.4 150.1 723.8 150.5 725.3 151.0 726.7 151.6 728.0 152.2 729.4 152.8 730.8 153.4 732.1 154.0 733.5 154.7 734.8 155.4 736.1 156.2 737.4 156.9 738.7 157.7 740.0 158.4 741.3 159.2 742.5 160.1 743.7 160.9 745.0 161.8 746.1 162.7 747.3 163.7 748.4 164.7 749.4 165.8 750.4 166.9 751.4 168.0 752.4 169.2 753.3 170.4 754.1 171.6 755.0 172.8 755.8 174.1 756.6 175.3 757.4 176.6 758.1 177.9 758.9 179.2 759.6 180.5 760.3 181.9 761.0 183.2 761.6 184.6 762.3 185.9 762.9 187.3 763.4 188.7 764.0 190.1 764.5 191.5 765.0 192.9 765.5 194.3 765.9 195.8 766.4 197.2 766.8 198.6 767.1 200.1 767.5 201.6 767.8 203.0 768.2 204.5 768.5 206.0 768.8 207.4 769.1 208.9 769.4 210.4 769.7 211.8 770.0 213.3 770.1 214.8 770.2 216.3 770.3 217.8 770.3 219.3 770.2 220.8 770.2 222.3 770.1 223.8 770.0 225.3 769.9 226.7 769.8 228.2 769.7 229.7 769.5 231.2 769.4 232.7 769.3 234.2 769.2 235.7 769.0 237.2 768.9 238.7 768.8 240.2 768.6 241.7 768.5 243.2 768.3 244.7 768.2 246.2 768.0 247.7 767.8 249.2 767.7 250.7 767.5 252.2 767.3 253.7 767.1 255.2 766.9 256.6 766.7 258.1 766.5 259.6 766.3 261.1 766.1 262.6 765.9 264.1 765.7 265.6 765.5 267.1 765.3 268.5 765.1 270.0 764.8 271.5 764.6 273.0 764.4 274.5 764.2 276.0 763.9 277.5 763.7 278.9 763.4 280.4 763.2 281.9 763.0 283.4 762.7 284.9 762.5 286.4 762.2 287.8 762.0 289.3 761.7 290.8 761.4 292.3 761.2 293.7 760.9 295.2 760.6 296.7 760.4 298.2 760.1 299.7 759.8 301.1 759.5 302.6 759.2 304.1 758.9 305.5 758.5 307.0 758.2 308.5 757.9 309.9 757.5 311.4 757.1 312.8 756.8 314.3 756.4 315.7 756.0 317.2 755.5 318.6 755.1 320.1 754.6 321.5 754.2 322.9 753.7 324.3 753.2 325.8 752.7 327.2 752.1 328.6 751.6 330.0 751.1 331.4 750.5 332.8 750.0 334.2 749.5 335.6 748.9 337.0 748.4 338.4 747.9 339.8 747.3 341.2 746.8 342.6 746.3 344.0 745.7 345.4 745.2 346.8 744.6 348.2 744.1 349.6 743.5 351.0 743.0 352.4 742.4 353.8 741.9 355.2 741.3 356.6 740.7 358.0 740.1 359.4 739.6 360.8 739.0 362.1 738.4 363.5 737.8 364.9 737.2 366.3 736.6 367.7 736.0 369.0 735.4 370.4 734.8 371.8 734.1 373.1 733.5 374.5 732.8 375.9 732.2 377.2 731.5 378.5 730.8 379.9 730.1 381.2 729.4 382.5 728.7 383.9 728.0 385.2 727.4 386.5 726.7 387.9 726.0 389.2 725.3 390.6 724.7 391.9 724.0 393.3 723.3 394.6 722.7 396.0 722.0 397.3 721.4 398.7 720.7 400.0 720.0 401.3 719.3 402.7 718.6 404.0 717.9 405.3 717.2 406.6 716.5 408.0 715.7 409.3 715.0 410.6 714.2 411.9 713.5 413.2 712.7 414.5 712.0 415.8 711.2 417.0 710.4 418.3 709.6 419.6 708.8 420.9 708.0 422.2 707.2 423.4 706.4 424.7 705.6 425.9 704.7 427.2 703.9 428.4 703.0 429.7 702.1 430.9 701.3 432.1 700.4 433.3 699.5 434.5 698.6 435.7 697.7 437.0 696.8 438.2 696.0 439.4 695.1 440.6 694.2 441.8 693.3 443.0 692.5 444.3 691.6 445.5 690.7 446.7 689.9 447.9 689.0 449.2 688.1 450.4 687.2 451.6 686.4 452.8 685.5 454.0 684.6 455.2 683.7 456.4 682.7 457.6 681.8 458.8 680.9 460.0 679.9 461.1 678.9 462.3 678.0 463.4 676.9 464.5 675.9 465.6 674.9 466.7 673.9 467.8 672.8 468.9 671.7 469.9 670.7 471.0 669.6 472.0 668.5 473.1 667.4 474.1 666.3 475.1 665.2 476.2 664.1 477.2 663.0 478.2 661.9 479.2 660.8 480.2 659.7 481.2 658.6 482.2 657.5 483.2 656.3 484.2 655.2 485.2 654.1 486.2 652.9 487.2 651.8 488.2 650.7 489.2 649.5 490.1 648.4 491.1 647.2 492.0 646.0 493.0 644.9 494.0 643.7 494.9 642.5 495.8 641.3 496.7 640.1 497.6 638.9 498.5 637.7 499.4 636.5 500.3 635.2 501.1 634.0 502.0 632.7 502.8 631.5 503.6 630.2 504.5 629.0 505.3 627.7 506.1 626.5 506.9 625.2 507.7 624.0 508.6 622.7 509.3 621.4 510.1 620.1 510.9 618.8 511.7 617.5 512.4 616.2 513.2 614.9 513.9 613.6 514.6 612.3 515.4 611.0 516.1 609.7 516.8 608.4 517.6 607.0 518.3 605.7 519.0 604.4 519.8 603.1 520.5Z" fill="#4a8fbf" fill-rule="evenodd"/>
<path d="M604.5 538.6 639.6 543.9 656.6 534.5 668.8 525.8 708.6 491.7 720.4 480.3 732.3 466.9 755.7 436.0 764.0 423.6 772.4 409.5 779.9 394.9 787.1 378.6 794.0 360.5 804.0 332.4 808.7 315.2 813.7 287.4 817.5 260.9 819.5 235.7 819.6 228.3 818.9 222.4 816.0 207.9 813.2 197.8 808.1 185.5 805.2 180.3 801.1 174.1 792.5 163.7 781.5 153.6 775.4 149.4 769.9 147.0 737.7 138.1M626.7 191.8 622.6 186.9 618.1 183.0 613.2 179.6 607.8 177.0 591.0 170.6 562.8 163.2" fill="none" stroke="#f2b81a" stroke-width="1.5"/>
<path d="M738.6 158.6 726.6 161.5 716.8 165.1 709.0 169.6 702.0 175.2 695.7 181.6 690.1 188.5 684.0 197.0 671.6 215.7 667.1 221.6 661.1 228.2 656.3 231.6 652.1 232.9 646.2 232.8 613.4 225.0M570.3 186.3 561.3 188.5 551.5 192.3 543.7 196.6 537.7 201.2 530.4 208.6 523.1 218.0 516.9 228.2 511.8 238.9 507.2 250.0 505.1 257.1 502.7 270.2 500.7 286.4 500.4 295.3 500.8 304.3 504.5 338.2 507.0 352.9 510.9 370.3 514.1 381.7 518.4 394.4 523.7 408.3 529.8 421.9 537.1 436.6 543.8 448.2 549.6 456.9 556.9 466.3 565.9 476.3 575.4 485.8 584.4 493.7 593.8 501.1 603.5 508.0 613.2 514.0" fill="none" stroke="#f2b81a" stroke-width="1.5"/>
<use href="#ho" fill="none" stroke="#f7b000" stroke-width="2.8"/>
<use href="#hi" fill="none" stroke="#f7b000" stroke-width="2.8"/>
<g fill="#e8503a" opacity="0.85"><rect x="597.8" y="532.3" width="1.8" height="1.8"/><rect x="601.0" y="522.3" width="1.8" height="1.8"/><rect x="603.3" y="517.2" width="1.8" height="1.8"/><rect x="570.6" y="520.5" width="1.8" height="1.8"/><rect x="576.2" y="510.9" width="1.8" height="1.8"/><rect x="578.9" y="506.0" width="1.8" height="1.8"/><rect x="547.3" y="504.9" width="1.8" height="1.8"/><rect x="553.3" y="495.7" width="1.8" height="1.8"/><rect x="556.7" y="491.3" width="1.8" height="1.8"/><rect x="526.9" y="485.9" width="1.8" height="1.8"/><rect x="533.7" y="478.8" width="1.8" height="1.8"/><rect x="537.7" y="474.8" width="1.8" height="1.8"/><rect x="507.7" y="463.1" width="1.8" height="1.8"/><rect x="514.4" y="457.4" width="1.8" height="1.8"/><rect x="518.7" y="453.9" width="1.8" height="1.8"/><rect x="494.4" y="438.8" width="1.8" height="1.8"/><rect x="500.0" y="435.7" width="1.8" height="1.8"/><rect x="504.9" y="433.0" width="1.8" height="1.8"/><rect x="482.1" y="413.0" width="1.8" height="1.8"/><rect x="487.2" y="410.0" width="1.8" height="1.8"/><rect x="492.3" y="407.7" width="1.8" height="1.8"/><rect x="471.2" y="385.4" width="1.8" height="1.8"/><rect x="476.6" y="383.1" width="1.8" height="1.8"/><rect x="481.9" y="381.3" width="1.8" height="1.8"/><rect x="463.4" y="358.3" width="1.8" height="1.8"/><rect x="469.2" y="356.8" width="1.8" height="1.8"/><rect x="474.6" y="355.6" width="1.8" height="1.8"/><rect x="457.6" y="330.5" width="1.8" height="1.8"/><rect x="464.1" y="330.0" width="1.8" height="1.8"/><rect x="469.6" y="329.3" width="1.8" height="1.8"/><rect x="454.6" y="301.0" width="1.8" height="1.8"/><rect x="460.8" y="300.0" width="1.8" height="1.8"/><rect x="466.4" y="299.5" width="1.8" height="1.8"/><rect x="455.8" y="273.2" width="1.8" height="1.8"/><rect x="460.6" y="274.0" width="1.8" height="1.8"/><rect x="466.2" y="274.5" width="1.8" height="1.8"/><rect x="461.2" y="245.6" width="1.8" height="1.8"/><rect x="464.8" y="246.9" width="1.8" height="1.8"/><rect x="470.2" y="248.2" width="1.8" height="1.8"/><rect x="471.9" y="219.9" width="1.8" height="1.8"/><rect x="474.8" y="221.1" width="1.8" height="1.8"/><rect x="479.8" y="223.6" width="1.8" height="1.8"/><rect x="488.2" y="195.4" width="1.8" height="1.8"/><rect x="489.7" y="197.8" width="1.8" height="1.8"/><rect x="494.0" y="201.4" width="1.8" height="1.8"/><rect x="507.9" y="176.3" width="1.8" height="1.8"/><rect x="510.1" y="180.8" width="1.8" height="1.8"/><rect x="512.6" y="185.8" width="1.8" height="1.8"/><rect x="532.1" y="164.3" width="1.8" height="1.8"/><rect x="533.6" y="172.9" width="1.8" height="1.8"/><rect x="534.5" y="178.4" width="1.8" height="1.8"/><rect x="559.5" y="165.7" width="1.8" height="1.8"/><rect x="555.8" y="174.3" width="1.8" height="1.8"/><rect x="553.7" y="179.4" width="1.8" height="1.8"/><rect x="582.9" y="178.9" width="1.8" height="1.8"/><rect x="577.3" y="186.7" width="1.8" height="1.8"/><rect x="573.6" y="190.9" width="1.8" height="1.8"/><rect x="598.7" y="202.3" width="1.8" height="1.8"/><rect x="592.0" y="206.6" width="1.8" height="1.8"/><rect x="587.3" y="209.6" width="1.8" height="1.8"/><rect x="627.4" y="196.3" width="1.8" height="1.8"/><rect x="634.2" y="200.3" width="1.8" height="1.8"/><rect x="638.9" y="203.4" width="1.8" height="1.8"/><rect x="644.1" y="172.0" width="1.8" height="1.8"/><rect x="650.3" y="176.5" width="1.8" height="1.8"/><rect x="654.7" y="179.9" width="1.8" height="1.8"/><rect x="663.0" y="151.4" width="1.8" height="1.8"/><rect x="667.4" y="158.6" width="1.8" height="1.8"/><rect x="670.8" y="163.1" width="1.8" height="1.8"/><rect x="686.4" y="138.0" width="1.8" height="1.8"/><rect x="689.8" y="147.7" width="1.8" height="1.8"/><rect x="691.3" y="153.1" width="1.8" height="1.8"/><rect x="713.4" y="134.9" width="1.8" height="1.8"/><rect x="713.0" y="144.3" width="1.8" height="1.8"/><rect x="712.5" y="149.9" width="1.8" height="1.8"/><rect x="739.9" y="143.8" width="1.8" height="1.8"/><rect x="735.3" y="151.9" width="1.8" height="1.8"/><rect x="732.6" y="156.8" width="1.8" height="1.8"/><rect x="759.3" y="163.2" width="1.8" height="1.8"/><rect x="753.8" y="166.4" width="1.8" height="1.8"/><rect x="749.4" y="169.9" width="1.8" height="1.8"/><rect x="772.3" y="187.4" width="1.8" height="1.8"/><rect x="766.4" y="189.6" width="1.8" height="1.8"/><rect x="761.2" y="191.5" width="1.8" height="1.8"/><rect x="778.8" y="215.9" width="1.8" height="1.8"/><rect x="772.3" y="215.2" width="1.8" height="1.8"/><rect x="766.7" y="215.5" width="1.8" height="1.8"/><rect x="777.6" y="243.8" width="1.8" height="1.8"/><rect x="770.6" y="242.6" width="1.8" height="1.8"/><rect x="765.0" y="242.0" width="1.8" height="1.8"/><rect x="774.1" y="271.8" width="1.8" height="1.8"/><rect x="766.9" y="271.1" width="1.8" height="1.8"/><rect x="761.4" y="270.2" width="1.8" height="1.8"/><rect x="769.0" y="301.3" width="1.8" height="1.8"/><rect x="762.1" y="299.3" width="1.8" height="1.8"/><rect x="756.6" y="298.3" width="1.8" height="1.8"/><rect x="761.6" y="328.4" width="1.8" height="1.8"/><rect x="755.1" y="325.9" width="1.8" height="1.8"/><rect x="749.8" y="324.0" width="1.8" height="1.8"/><rect x="752.1" y="355.2" width="1.8" height="1.8"/><rect x="744.9" y="352.6" width="1.8" height="1.8"/><rect x="739.7" y="350.6" width="1.8" height="1.8"/><rect x="740.8" y="382.8" width="1.8" height="1.8"/><rect x="733.3" y="379.0" width="1.8" height="1.8"/><rect x="728.3" y="376.5" width="1.8" height="1.8"/><rect x="727.7" y="407.8" width="1.8" height="1.8"/><rect x="720.4" y="404.5" width="1.8" height="1.8"/><rect x="715.4" y="401.9" width="1.8" height="1.8"/><rect x="712.2" y="431.2" width="1.8" height="1.8"/><rect x="706.3" y="428.0" width="1.8" height="1.8"/><rect x="701.7" y="424.8" width="1.8" height="1.8"/><rect x="695.1" y="454.1" width="1.8" height="1.8"/><rect x="689.7" y="451.2" width="1.8" height="1.8"/><rect x="685.1" y="448.0" width="1.8" height="1.8"/><rect x="675.5" y="476.3" width="1.8" height="1.8"/><rect x="671.9" y="472.2" width="1.8" height="1.8"/><rect x="668.0" y="468.2" width="1.8" height="1.8"/><rect x="654.2" y="495.0" width="1.8" height="1.8"/><rect x="650.5" y="491.5" width="1.8" height="1.8"/><rect x="646.9" y="487.2" width="1.8" height="1.8"/><rect x="632.8" y="513.8" width="1.8" height="1.8"/><rect x="628.5" y="507.7" width="1.8" height="1.8"/><rect x="625.4" y="503.0" width="1.8" height="1.8"/><rect x="608.6" y="530.4" width="1.8" height="1.8"/><rect x="601.0" y="522.3" width="1.8" height="1.8"/><rect x="603.3" y="517.2" width="1.8" height="1.8"/><rect x="614.6" y="539.4" width="1.8" height="1.8"/><rect x="645.5" y="539.4" width="1.8" height="1.8"/><rect x="673.5" y="520.2" width="1.8" height="1.8"/><rect x="699.2" y="498.0" width="1.8" height="1.8"/><rect x="723.9" y="474.7" width="1.8" height="1.8"/><rect x="744.9" y="447.9" width="1.8" height="1.8"/><rect x="764.6" y="420.3" width="1.8" height="1.8"/><rect x="780.7" y="390.3" width="1.8" height="1.8"/><rect x="793.4" y="358.8" width="1.8" height="1.8"/><rect x="804.6" y="326.7" width="1.8" height="1.8"/><rect x="811.7" y="293.5" width="1.8" height="1.8"/><rect x="816.6" y="259.8" width="1.8" height="1.8"/><rect x="818.6" y="225.9" width="1.8" height="1.8"/><rect x="810.8" y="192.9" width="1.8" height="1.8"/><rect x="793.0" y="164.2" width="1.8" height="1.8"/><rect x="765.5" y="145.0" width="1.8" height="1.8"/><rect x="617.5" y="182.3" width="1.8" height="1.8"/><rect x="586.6" y="168.7" width="1.8" height="1.8"/><rect x="726.1" y="160.5" width="1.8" height="1.8"/><rect x="697.4" y="177.9" width="1.8" height="1.8"/><rect x="677.1" y="205.1" width="1.8" height="1.8"/><rect x="655.2" y="230.7" width="1.8" height="1.8"/><rect x="622.1" y="226.4" width="1.8" height="1.8"/><rect x="557.9" y="188.5" width="1.8" height="1.8"/><rect x="530.0" y="207.2" width="1.8" height="1.8"/><rect x="511.9" y="235.8" width="1.8" height="1.8"/><rect x="502.0" y="268.2" width="1.8" height="1.8"/><rect x="499.8" y="302.0" width="1.8" height="1.8"/><rect x="503.4" y="335.8" width="1.8" height="1.8"/><rect x="509.9" y="369.2" width="1.8" height="1.8"/><rect x="520.4" y="401.5" width="1.8" height="1.8"/><rect x="534.5" y="432.4" width="1.8" height="1.8"/><rect x="552.6" y="461.1" width="1.8" height="1.8"/><rect x="575.7" y="486.0" width="1.8" height="1.8"/><rect x="602.5" y="507.0" width="1.8" height="1.8"/></g>
<path d="M467 280 L501 287 M783.5 233 L820 242 M603 538.5 L640 544.5 M602 199.5 L614 202 M640 205 L674 211" stroke="#101010" stroke-width="1.3"/>
<text x="684" y="393" text-anchor="middle" font-family="Liberation Serif" font-style="italic" font-weight="bold" font-size="27" fill="#f0f2f2" fill-opacity="0.38" filter="url(#wmShadow)" textLength="186" lengthAdjust="spacingAndGlyphs">i3DOne.com</text>
<!-- origin marker -->
<path d="M452.8 435 L463.2 432.3 L465.8 434.3 L465.8 444 L458 443.4 Z" fill="#18d8e8"/>
<path d="M458 443.4 L465.8 444 L465.8 434.3 L461 437 Z" fill="#10a8b8"/>
<path d="M463.9 433 L471 415.4 C474 414 479 417 480.8 422.6 Z" fill="#e84a30"/>
<path d="M463.9 433 L471 415.4 C473 414.6 475.5 415.2 477 416.5 Z" fill="#b83020"/>
<path d="M450.2 450 L477.5 417.4" stroke="#111" stroke-width="1.1"/>
<path d="M456.7 435 L495.8 442.1 M453.5 438.9 L493.2 445.7 M463.5 433 L463.5 444" stroke="#111" stroke-width="1.2"/>
</g>
</svg>

<svg class="abs" width="1366" height="768" viewBox="0 0 1366 768" style="pointer-events:none">
<g font-family="Liberation Sans" font-size="13" fill="#3cb0e2" text-anchor="middle">
 <text x="258" y="731">-50</text>
 <text x="345" y="726">-25</text>
 <text x="437" y="722">0</text>
 <text x="535" y="717" opacity="0.8">25</text>
 <text x="638" y="711" opacity="0.35">50</text>
 <text x="745" y="706" opacity="0.3">75</text>
 <text x="857" y="700" opacity="0.3">100</text>
 <text x="973" y="696">125</text>
</g>
</svg>

<svg class="abs" width="1366" height="768" viewBox="0 0 1366 768" style="pointer-events:none">
<defs>
 <linearGradient id="ringG" x1="0" y1="0" x2="1" y2="1">
  <stop offset="0" stop-color="#e8f0f8"/><stop offset="0.5" stop-color="#a9bccc"/><stop offset="1" stop-color="#dfe8f0"/>
 </linearGradient>
 <clipPath id="discClip"><circle cx="170.5" cy="613.1" r="63.5"/></clipPath>
</defs>
<circle cx="170.5" cy="613.1" r="80" fill="none" stroke="#c8cccc" stroke-width="0.6" opacity="0.6"/>
<circle cx="170.5" cy="613.1" r="71.3" fill="#8a98a4"/>
<circle cx="170.5" cy="613.1" r="70.3" fill="url(#ringG)"/>
<circle cx="170.5" cy="613.1" r="64.5" fill="#f4f8fb"/>
<circle cx="170.5" cy="613.1" r="63.5" fill="#1b1d21"/>
<g clip-path="url(#discClip)" stroke="#4a4c50" stroke-width="1.2" fill="none">
 <path d="M139 540 Q132 613 139 690 M159.8 540 Q157 613 159.8 690 M180.6 540 Q183 613 180.6 690 M201.5 540 Q208 613 201.5 690"/>
 <path d="M100 562 Q170 553 240 562 M100 644 Q170 656 240 644 M100 665 Q170 680 240 665 M100 583 Q170 578 240 583"/>
 <path d="M118 540 Q108 613 118 690 M222 540 Q232 613 222 690"/>
</g>
<polygon points="131.7,572.5 173.3,568.3 212.9,574.6 218.1,585.0 217.1,639.2 210.8,651.7 167.1,657.9 129.6,648.5 121.2,637.1 122.3,582.9" fill="#dcdcdc" stroke="#b8b8b8" stroke-width="0.8"/>
<polygon points="131.7,572.5 173.3,568.3 212.9,574.6 217.1,585.0 181.7,578.8 165.0,578.8 123.3,582.9" fill="#e6e6e6" stroke="#b0b0b0" stroke-width="0.8"/>
<polygon points="123.3,582.9 165.0,578.8 165.0,631.9 122.3,637.1" fill="#eeeeee" stroke="#a8a8a8" stroke-width="0.8"/>
<polygon points="181.7,578.8 217.5,585.0 217.1,639.2 181.7,631.9" fill="#e9e9e9" stroke="#a8a8a8" stroke-width="0.8"/>
<polygon points="122.3,637.1 165.0,631.9 181.7,631.9 217.1,639.2 210.8,651.7 167.1,657.9 129.6,648.5" fill="#e2e2e2" stroke="#b0b0b0" stroke-width="0.8"/>
<polygon points="165.4,578.3 181.7,578.3 181.7,631.9 165.0,631.9" fill="#3d8ae6"/>
<path d="M165.0 578.8 L173.3 568.3 L181.7 578.8 M165.0 631.9 L173.3 645.4 L181.7 631.9" stroke="#aaa" stroke-width="0.8" fill="none"/>
<g stroke="#3d8ae6" stroke-width="2.2" fill="none" stroke-linecap="round">
 <path d="M143.1 589.6 L143.7 622.1 M143.7 602.7 L156.7 602.1 M129.6 626.7 L157.7 623.5"/>
 <path d="M192.3 589.6 L191.6 625.5 M186.8 606 C190 608.5 194 610.5 196.9 613.2 C200 617 203 622 205 628.7 M199.6 595 L212.3 598.2 M199.6 595 L199.6 616.4 M199.6 616.2 L212 619.2 M210.5 598.2 L210.5 618.7"/>
</g>
<path d="M145.8 651.8 L155 649.6 L163 648.2 L175 648.6 L185 650.4 L192 652.6 L181 654.6 L167 656.6 L157 654.6 Z" fill="#3d8ae6"/>
</svg>

<svg class="abs" width="1366" height="768" viewBox="0 0 1366 768" style="pointer-events:none">
<defs>
 <linearGradient id="shelfTop" x1="0" y1="0" x2="0" y2="1"><stop offset="0" stop-color="#d8d8d8" stop-opacity="0.7"/><stop offset="1" stop-color="#e0e0e0" stop-opacity="0.95"/></linearGradient>
 <linearGradient id="shelfShadow" x1="0" y1="0" x2="0" y2="1"><stop offset="0" stop-color="#b8b8b8"/><stop offset="1" stop-color="#e6e6e6" stop-opacity="0"/></linearGradient>
 <linearGradient id="shelfShadowH" x1="0" y1="0" x2="1" y2="0"><stop offset="0" stop-color="#b0b0b0" stop-opacity="0.5"/><stop offset="0.6" stop-color="#a8a8a8" stop-opacity="0.8"/><stop offset="1" stop-color="#989898" stop-opacity="1"/></linearGradient>
 <linearGradient id="shelfFront" x1="0" y1="0" x2="0" y2="1"><stop offset="0" stop-color="#f4f4f4"/><stop offset="0.3" stop-color="#fdfdfd"/><stop offset="1" stop-color="#f2f2f2"/></linearGradient>
 <filter id="bl1" x="-50%" y="-100%" width="200%" height="300%"><feGaussianBlur stdDeviation="1.6"/></filter>
 <linearGradient id="ddBtn" x1="0" y1="0" x2="0" y2="1"><stop offset="0" stop-color="#d0d0d0"/><stop offset="1" stop-color="#b4b4b4"/></linearGradient>
</defs>
<path d="M502 690.6 L918 690.6 L927 702.7 L491 702.7 Z" fill="url(#shelfTop)"/>
<rect x="491" y="702.7" width="436" height="9.6" fill="url(#shelfFront)"/>
<rect x="493" y="711.5" width="432" height="4" fill="url(#shelfShadowH)" filter="url(#bl1)"/>
<g filter="url(#bl1)" fill="#8c8c8c" opacity="0.7">
 <ellipse cx="550" cy="684.5" rx="9" ry="2"/><ellipse cx="601" cy="688" rx="9" ry="2"/><ellipse cx="652" cy="687" rx="9" ry="2"/><ellipse cx="703" cy="687.5" rx="9" ry="2"/><ellipse cx="754" cy="689.5" rx="9" ry="2"/>
</g>
<!-- eye -->
<path d="M540 676.5 C544 671 548 670.5 549.8 670.5 C552 670.5 556 671 559.6 676.5 C556 682 552 682.5 549.8 682.5 C548 682.5 544 682 540 676.5 Z" fill="#2e74c8"/>
<circle cx="549.8" cy="676.5" r="3.8" fill="#e8f0fa"/><circle cx="550" cy="676.5" r="2" fill="#2e74c8"/>
<!-- wire cube -->
<g transform="translate(600.5 677.5)" stroke="#8ab4e6" stroke-width="1.3" fill="#f4f8fd" fill-opacity="0.8">
 <path d="M0 -9 L8 -5 L8 5 L0 9.5 L-8 5 L-8 -5 Z"/>
 <path d="M-8 -5 L0 -1 L8 -5 M0 -1 L0 9.5 M0 -9 L0 -1 M-8 5 L0 -1 L8 5" fill="none" stroke-width="0.9"/>
</g>
<!-- solid cube -->
<g transform="translate(652 677.5)">
 <path d="M-9 -5 L-3 -8 L9 -6 L9 4 L3 7.5 L-9 5 Z" fill="#a6c6ea"/>
 <path d="M-9 -5 L-3 -8 L9 -6 L3 -3 Z" fill="#bcd6f2"/>
 <path d="M3 -3 L9 -6 L9 4 L3 7.5 Z" fill="#90b4e0"/>
</g>
<!-- magnifier -->
<circle cx="700.5" cy="675.5" r="5.5" fill="#e6f0fb" stroke="#2e74c8" stroke-width="2"/>
<circle cx="700.5" cy="675.5" r="2" fill="#7ab0e6"/>
<path d="M704.5 679.5 L711 686" stroke="#2e74c8" stroke-width="3" stroke-linecap="round"/>
<!-- frame icon -->
<rect x="744.7" y="669.7" width="18.3" height="18" fill="#2a88e8"/>
<rect x="747" y="672" width="13.7" height="13.4" fill="#d6e8fa"/>
<path d="M749 684 L749 673 M758.7 684 L758.7 673 M749 676 L758.7 676" stroke="#7ab4ee" stroke-width="0.8"/>
<path d="M749.5 677 L754 675 L758 677 L758 683.5 L754 685.5 L749.5 683.5 Z" fill="#f6a800"/>
<path d="M749.5 677 L754 675 L758 677 L754 679 Z" fill="#ffc640"/>
<path d="M754 679 L758 677 L758 683.5 L754 685.5 Z" fill="#e08a00"/>
<!-- dropdown -->
<rect x="780.2" y="667.2" width="112.4" height="21.8" fill="#7a7a7a"/>
<rect x="781.2" y="668.2" width="95" height="19.8" fill="#fafafa"/>
<rect x="876.2" y="668.2" width="15.4" height="19.8" fill="url(#ddBtn)"/>
<path d="M881.5 676.5 L886.5 676.5 L884 679 Z" fill="#444"/>
<text x="782.5" y="684" font-family="Liberation Sans" font-size="14.5" fill="#111">边</text>
</svg>

<svg class="abs" width="1366" height="768" viewBox="0 0 1366 768" style="pointer-events:none">
<defs><radialGradient id="g53" cx="0.4" cy="0.35" r="0.7"><stop offset="0" stop-color="#7ee08a"/><stop offset="1" stop-color="#30b048"/></radialGradient></defs>
<path d="M1343 300 C1343 296 1345 294 1346 295 C1356 330 1360 370 1360 390 C1360 420 1356 450 1346 480 C1345 482 1343 481 1343 477 Z" fill="#3a78c6"/>
<path d="M1348 377 L1355 372 L1357 382 L1350 386 Z" fill="#ffffff"/>
<circle cx="1368" cy="403" r="21.5" fill="#ffffff"/>
<circle cx="1368" cy="403" r="19.5" fill="url(#g53)"/>
<text x="1351" y="408.5" font-family="Liberation Sans" font-weight="bold" font-size="13" fill="#fff">53</text>
</svg>

<svg class="abs" style="top:50px" width="52" height="678" viewBox="0 50 52 678">
<defs>
 <filter id="blur2" x="-50%" y="-100%" width="200%" height="300%"><feGaussianBlur stdDeviation="1.5"/></filter>
 <radialGradient id="sph" cx="0.4" cy="0.3" r="0.7"><stop offset="0" stop-color="#8cc4ff"/><stop offset="0.6" stop-color="#3a84dc"/><stop offset="1" stop-color="#2a5eb0"/></radialGradient>
</defs>
<rect x="0" y="50" width="52" height="678" fill="#e6e6e6"/>
<rect x="50" y="50" width="1" height="678" fill="#fafafa"/><rect x="51" y="50" width="1" height="678" fill="#9fb2c2"/>
<line x1="5" y1="102.5" x2="47" y2="102.5" stroke="#a9bfcb" stroke-width="1" stroke-dasharray="4 2.5"/><line x1="5" y1="158.4" x2="47" y2="158.4" stroke="#a9bfcb" stroke-width="1" stroke-dasharray="4 2.5"/><line x1="5" y1="214.3" x2="47" y2="214.3" stroke="#a9bfcb" stroke-width="1" stroke-dasharray="4 2.5"/><line x1="5" y1="270.2" x2="47" y2="270.2" stroke="#a9bfcb" stroke-width="1" stroke-dasharray="4 2.5"/><line x1="5" y1="326.1" x2="47" y2="326.1" stroke="#a9bfcb" stroke-width="1" stroke-dasharray="4 2.5"/><line x1="5" y1="382.0" x2="47" y2="382.0" stroke="#a9bfcb" stroke-width="1" stroke-dasharray="4 2.5"/><line x1="5" y1="437.9" x2="47" y2="437.9" stroke="#a9bfcb" stroke-width="1" stroke-dasharray="4 2.5"/><line x1="5" y1="493.8" x2="47" y2="493.8" stroke="#a9bfcb" stroke-width="1" stroke-dasharray="4 2.5"/><line x1="5" y1="549.7" x2="47" y2="549.7" stroke="#a9bfcb" stroke-width="1" stroke-dasharray="4 2.5"/>
<ellipse cx="26" cy="87" rx="11" ry="3" fill="#8a8a8a" opacity="0.45" filter="url(#blur2)"/><ellipse cx="26" cy="142" rx="11" ry="3" fill="#8a8a8a" opacity="0.45" filter="url(#blur2)"/><ellipse cx="26" cy="198" rx="11" ry="3" fill="#8a8a8a" opacity="0.45" filter="url(#blur2)"/><ellipse cx="26" cy="254" rx="11" ry="3" fill="#8a8a8a" opacity="0.45" filter="url(#blur2)"/><ellipse cx="26" cy="310" rx="11" ry="3" fill="#8a8a8a" opacity="0.45" filter="url(#blur2)"/><ellipse cx="26" cy="366" rx="11" ry="3" fill="#8a8a8a" opacity="0.45" filter="url(#blur2)"/><ellipse cx="26" cy="421" rx="11" ry="3" fill="#8a8a8a" opacity="0.45" filter="url(#blur2)"/><ellipse cx="26" cy="477" rx="11" ry="3" fill="#8a8a8a" opacity="0.45" filter="url(#blur2)"/><ellipse cx="26" cy="533" rx="11" ry="3" fill="#8a8a8a" opacity="0.45" filter="url(#blur2)"/><ellipse cx="26" cy="589" rx="11" ry="3" fill="#8a8a8a" opacity="0.45" filter="url(#blur2)"/>

<!-- 1 primitives -->
<g transform="translate(26 76)">
 <circle cx="-7" cy="3" r="6" fill="#3b7fd4"/>
 <rect x="-5" y="-8" width="9" height="15" fill="#3b7fd4"/><ellipse cx="-0.5" cy="-8" rx="4.5" ry="1.8" fill="#fff"/>
 <path d="M3 7 L8 -6 L12 7 Z" fill="#3b7fd4"/><path d="M5 7 L8 -2 L7 7 Z" fill="#fff"/>
</g>
<!-- 2 pencil -->
<g transform="translate(26 131)">
 <ellipse cx="-1" cy="6" rx="8" ry="3.5" fill="none" stroke="#3b7fd4" stroke-width="1.8"/>
 <path d="M-3 5 L-1 -1 L7 -10 L10 -7 L2 2 Z" fill="#3b7fd4"/>
 <path d="M-3 5 L-1 -1 L2 2 Z" fill="#e6e6e6"/>
</g>
<!-- 3 sketch square -->
<g transform="translate(26 187)">
 <path d="M-9 9 L-9 -9 L9 -9 L9 2 C9 6 6 9 2 9 Z" fill="none" stroke="#3b7fd4" stroke-width="2.2"/>
 <path d="M9 2 C9 6 6 9 2 9" fill="none" stroke="#eee" stroke-width="1.5" stroke-dasharray="1.5 1"/>
</g>
<!-- 4 eraser -->
<g transform="translate(26 243)">
 <path d="M-10 4 L0 -6 L5 -4 L-4 6 Z" fill="#3b7fd4"/>
 <path d="M0 -6 L6 -10 L11 -5 L5 1 L-4 6 L5 -4 Z" fill="#f4f4f4" stroke="#3b7fd4" stroke-width="1.2"/>
</g>
<!-- 5 cube -->
<g transform="translate(26 299)">
 <path d="M0 -10 L9 -6 L9 5 L0 9 L-9 5 L-9 -6 Z" fill="#3b7fd4"/>
 <path d="M-9 -6 L0 -2 L9 -6 M0 -2 L0 9" stroke="#e8e8e8" stroke-width="1.2" fill="none"/>
</g>
<!-- 6 move -->
<g transform="translate(26 355)" fill="#3b7fd4">
 <path d="M0 -10 L4 -5 L1.5 -5 L1.5 -1.5 L5 -1.5 L5 -4 L10 0 L5 4 L5 1.5 L1.5 1.5 L1.5 5 L4 5 L0 10 L-4 5 L-1.5 5 L-1.5 1.5 L-5 1.5 L-5 4 L-10 0 L-5 -4 L-5 -1.5 L-1.5 -1.5 L-1.5 -5 L-4 -5 Z"/>
</g>
<!-- 7 magnet -->
<g transform="translate(26 410)">
 <path d="M-9 6 L-9 -1 A9 9 0 0 1 9 -1 L9 6 L5 6 L5 -1 A5 5 0 0 0 -5 -1 L-5 6 Z" fill="#3b7fd4"/>
 <rect x="-9" y="3" width="4" height="4" fill="#111"/><rect x="5" y="3" width="4" height="4" fill="#111"/>
 <rect x="-9" y="7" width="4" height="2" fill="#666"/><rect x="5" y="7" width="4" height="2" fill="#666"/>
</g>
<!-- 8 combine -->
<g transform="translate(26 466)">
 <path d="M-8 -3 L-1 -6 L7 -3 L7 5 L0 8 L-8 5 Z" fill="#3b7fd4"/>
 <path d="M-8 -3 L0 0 L7 -3 M0 0 L0 8" stroke="#d8e6f6" stroke-width="0.8" fill="none"/>
 <path d="M-3 -6 L3 -9 L9 -6 L3 -3 Z" fill="#fff" stroke="#3b7fd4" stroke-width="0.8"/>
</g>
<!-- 9 measure -->
<g transform="translate(26 522)">
 <rect x="-10" y="0" width="20" height="7" fill="#3b7fd4"/>
 <rect x="-10" y="-8" width="1.2" height="8" fill="#444"/><rect x="8.8" y="-8" width="1.2" height="8" fill="#444"/>
 <path d="M-8 -4 L8 -4" stroke="#444" stroke-width="1"/>
</g>
<!-- 10 sphere -->
<g transform="translate(26 578)">
 <circle cx="0" cy="0" r="9.5" fill="url(#sph)"/>
</g>

</svg>

<svg class="abs" width="1366" height="51" viewBox="0 0 1366 51">
<defs>
 <linearGradient id="tbOuter" x1="0" y1="0" x2="0" y2="1">
  <stop offset="0" stop-color="#4d4c51"/><stop offset="0.8" stop-color="#39393c"/><stop offset="1" stop-color="#303033"/>
 </linearGradient>
 <linearGradient id="tbInner" x1="0" y1="0" x2="0" y2="1">
  <stop offset="0" stop-color="#47464a"/><stop offset="1" stop-color="#28282a"/>
 </linearGradient>
 <linearGradient id="logoG" x1="0" y1="0" x2="1" y2="0">
  <stop offset="0" stop-color="#2a7eea"/><stop offset="0.45" stop-color="#2a9af4"/><stop offset="1" stop-color="#16b8fa"/>
 </linearGradient>
 <radialGradient id="btnG" cx="0.5" cy="0.35" r="0.6"><stop offset="0" stop-color="#7fd21a"/><stop offset="1" stop-color="#3f9a06"/></radialGradient>
 <radialGradient id="btnB" cx="0.5" cy="0.35" r="0.6"><stop offset="0" stop-color="#6aa8ff"/><stop offset="1" stop-color="#2e6ee8"/></radialGradient>
 <radialGradient id="btnR" cx="0.5" cy="0.35" r="0.6"><stop offset="0" stop-color="#f06a5a"/><stop offset="1" stop-color="#d02a20"/></radialGradient>
</defs>
<rect width="1366" height="51" fill="url(#tbOuter)"/>
<path d="M219.8 0 C240 8 262 24 276 33 C284 39 291 43.3 300 43.3 L1112 43.3 C1122 43.3 1128 36 1133 28 C1140 17 1147 7 1153 0 Z" fill="url(#tbInner)"/>
<path d="M219.8 0 C240 8 262 24 276 33 C284 39 291 43.3 300 43.3 L1112 43.3 C1122 43.3 1128 36 1133 28 C1140 17 1147 7 1153 0" fill="none" stroke="#58585c" stroke-width="0.8"/>
<path d="M300 44 L1112 44" stroke="#505053" stroke-width="1.2"/>
<!-- paper plane -->
<path d="M3.1 20.1 L44.8 11 L11.5 23 Z" fill="#e4eef6"/>
<path d="M11.5 23 L44.8 11 L17.2 25.8 Z" fill="#5c7890"/>
<path d="M11.5 23 L17.2 25.8 L21.9 32 L15.1 36.8 Z" fill="#8aa2bc"/>
<path d="M17.2 25.8 L44.8 11 L30.2 41.5 L21.9 32 Z" fill="#eaf4fc"/>
<text x="52" y="36" font-family="Liberation Sans" font-weight="bold" font-style="italic" font-size="30" fill="url(#logoG)" stroke="url(#logoG)" stroke-width="0.9" letter-spacing="0.5" textLength="122" lengthAdjust="spacingAndGlyphs">3DOne</text>
<!-- save -->
<g fill="#b3b3b3">
 <path d="M309 8 h18 l6 6 v19 h-24 Z"/>
</g>
<rect x="314" y="9" width="11" height="6" fill="#2f2f32"/><rect x="321" y="10" width="2.5" height="4" fill="#b3b3b3"/>
<rect x="312" y="21" width="18" height="10" fill="#2f2f32"/>
<rect x="314" y="23" width="14" height="1.6" fill="#b3b3b3"/><rect x="314" y="26" width="14" height="1.6" fill="#b3b3b3"/><rect x="314" y="29" width="14" height="1.4" fill="#b3b3b3"/>
<!-- undo / redo -->
<path d="M352 19 L362 9 L362 15 C370 15 376 20 376 27 C376 30 375 32 373 34 C373 28 369 23 362 23 L362 29 Z" fill="#b3b3b3"/>
<path d="M416 19 L406 9 L406 15 C398 15 392 20 392 27 C392 30 393 32 395 34 C395 28 399 23 406 23 L406 29 Z" fill="#b3b3b3"/>
<text x="683" y="27" text-anchor="middle" font-family="Liberation Sans" font-size="16" fill="#dcdcdc">家庭版 - [模型001]</text>
<text x="1193" y="31" text-anchor="middle" font-family="Liberation Sans" font-weight="bold" font-size="27" fill="#d4d4d4">?</text>
<rect x="1223.5" y="0" width="1" height="46" fill="#5c5c60"/>
<g>
 <circle cx="1257.5" cy="22" r="15.5" fill="#161616"/><path d="M1243 27 A15.5 15.5 0 0 0 1272 27" stroke="#8a8a8a" stroke-width="1" fill="none" opacity="0.6"/>
 <circle cx="1257.5" cy="21.5" r="11.5" fill="url(#btnG)"/><rect x="1250" y="20" width="15" height="3" fill="#fff"/>
 <circle cx="1298.5" cy="22" r="15.5" fill="#161616"/><path d="M1284 27 A15.5 15.5 0 0 0 1313 27" stroke="#8a8a8a" stroke-width="1" fill="none" opacity="0.6"/>
 <circle cx="1298.5" cy="21.5" r="11.5" fill="url(#btnB)"/>
 <rect x="1296" y="15" width="8" height="9" rx="1.5" fill="none" stroke="#fff" stroke-width="1.3"/><rect x="1293" y="18" width="8" height="9" rx="1.5" fill="#4a88f0" stroke="#fff" stroke-width="1.3"/>
 <circle cx="1340.5" cy="22" r="15.5" fill="#161616"/><path d="M1326 27 A15.5 15.5 0 0 0 1355 27" stroke="#8a8a8a" stroke-width="1" fill="none" opacity="0.6"/>
 <circle cx="1340.5" cy="21.5" r="11.5" fill="url(#btnR)"/><path d="M1335 16 L1346 27 M1346 16 L1335 27" stroke="#fff" stroke-width="2"/>
</g>
</svg>

<svg class="abs" style="left:52px;top:51px" width="276" height="100" viewBox="52 51 276 100">
<defs>
 <radialGradient id="infoG" cx="0.45" cy="0.3" r="0.75"><stop offset="0" stop-color="#ffffff"/><stop offset="0.7" stop-color="#eeeeee"/><stop offset="1" stop-color="#cfcfcf"/></radialGradient>
 <radialGradient id="redG" cx="0.5" cy="0.4" r="0.6"><stop offset="0" stop-color="#f26050"/><stop offset="1" stop-color="#dc3c30"/></radialGradient>
 <radialGradient id="grnG" cx="0.5" cy="0.45" r="0.6"><stop offset="0" stop-color="#68b808"/><stop offset="1" stop-color="#4c9c00"/></radialGradient>
</defs>
<rect x="52" y="51" width="275" height="99.5" fill="#2e2e2e"/>
<rect x="53" y="52" width="273" height="97.5" fill="#a6a6a6"/>
<rect x="54" y="53" width="271" height="36.6" fill="#474747"/>
<rect x="54" y="89.6" width="270" height="58" fill="#f0f0f0"/>
<rect x="324" y="89.6" width="1" height="58.4" fill="#ffffff"/>
<rect x="54" y="147" width="271" height="1" fill="#ffffff"/>
<circle cx="73.1" cy="71.6" r="12.7" fill="url(#infoG)"/>
<circle cx="73.3" cy="63.2" r="2.3" fill="#2ba0d0"/>
<path d="M70 67.5 h5.3 v10.3 h2 v2.4 h-8.6 v-2.4 h2 v-7.9 h-0.7 Z" fill="#2ba0d0"/>
<circle cx="269.9" cy="72" r="13.5" fill="url(#redG)"/>
<ellipse cx="269.9" cy="66" rx="8.5" ry="4" fill="#ff8a7a" opacity="0.35"/>
<path d="M262.6 65.2 L277.2 79.6 M277.2 65.2 L262.6 79.6" stroke="#fff" stroke-width="2.2"/>
<circle cx="305.9" cy="71.7" r="13.5" fill="url(#grnG)"/>
<ellipse cx="305.5" cy="66" rx="8.5" ry="4" fill="#9ae030" opacity="0.45"/>
<path d="M295.7 72.6 L299.2 71 L303.4 75.7 C306 70 310 64.5 315 62.6 L314.5 66.5 C310 70 306.5 75 303.6 80.6 Z" fill="#fff"/>
<text x="65.5" y="123" font-family="Liberation Sans" font-size="13" fill="#1a1a1a">边 E</text>
<rect x="132.6" y="106.5" width="156" height="25" fill="#00c400"/>
<rect x="134" y="108" width="153.2" height="22" fill="#b89aa8"/>
<rect x="134.6" y="108.6" width="152" height="20.8" fill="#fafafa"/>
<text x="138" y="124" font-family="Liberation Sans" font-size="13" fill="#111">选中20个</text>
<path d="M296.3 114.2 L300.4 117.8 L304.6 114.2 M296.3 119.8 L300.4 123.4 L304.6 119.8" stroke="#222" stroke-width="1.2" fill="none"/>
</svg>


<svg class="abs" style="top:728px" width="1366" height="40" viewBox="0 728 1366 40">
<defs>
 <linearGradient id="edgeG" x1="0" y1="0" x2="1" y2="1"><stop offset="0" stop-color="#3a9af0"/><stop offset="1" stop-color="#0a64c8"/></linearGradient>
 <radialGradient id="e360" cx="0.4" cy="0.35" r="0.7"><stop offset="0" stop-color="#b8f070"/><stop offset="1" stop-color="#50b020"/></radialGradient>
</defs>
<rect x="0" y="728" width="1366" height="40" fill="#000"/>
<rect x="48" y="728" width="343.6" height="40" fill="#333333"/>
<!-- windows logo -->
<g fill="#fff">
 <path d="M16 741.3 L22.8 740.4 L22.8 747.2 L16 747.2 Z"/><path d="M24 740.2 L32 739.1 L32 747.2 L24 747.2 Z"/>
 <path d="M16 748.4 L22.8 748.4 L22.8 755.2 L16 754.3 Z"/><path d="M24 748.4 L32 748.4 L32 756.5 L24 755.4 Z"/>
</g>
<text x="57" y="754" font-family="Liberation Sans" font-size="14.5" fill="#a6a6a6">搜索 Web 和 Windows</text>
<!-- task view -->
<rect x="409.5" y="741.5" width="13.5" height="13.5" fill="none" stroke="#fff" stroke-width="1.2"/>
<path d="M408 743.5 L406.2 743.5 L406.2 753 L408 753 M424.5 743.5 L426.3 743.5 L426.3 753 L424.5 753" fill="none" stroke="#fff" stroke-width="1"/>
<!-- pinwheel -->
<g transform="translate(466.4 748.5)" fill="#dcdcdc">
 <path d="M-1 -1 C-8 -1 -11 -5 -10 -8 C-9 -11 -5 -11 -3 -9 C-1 -7 -1 -4 -1 -1 Z"/>
 <path d="M1 -1 C1 -8 5 -11 8 -10 C11 -9 11 -5 9 -3 C7 -1 4 -1 1 -1 Z"/>
 <path d="M1 1 C8 1 11 5 10 8 C9 11 5 11 3 9 C1 7 1 4 1 1 Z"/>
 <path d="M-1 1 C-1 8 -5 11 -8 10 C-11 9 -11 5 -9 3 C-7 1 -4 1 -1 1 Z"/>
</g>
<!-- edge -->
<path d="M511 749 C511 741 516 737.3 522 737.3 C528 737.3 531.5 741.5 531.5 748 L516.5 748 C517 752 520 754.5 524 754.5 C527 754.5 529.5 753.5 531 752.5 L531 757 C529 758.5 526 759.2 523 759.2 C516 759.2 511 755 511 749 Z M516.8 744.5 L526 744.5 C525.6 741.5 524 740.3 521.5 740.3 C519 740.3 517.3 742 516.8 744.5 Z" fill="url(#edgeG)"/>
<!-- store -->
<path d="M559 742 L580 742 L580 760 L559 760 Z" fill="#fff"/>
<path d="M564 742 C564 737 566 735.6 569.5 735.6 C573 735.6 575 737 575 742" stroke="#fff" stroke-width="1.4" fill="none"/>
<g fill="#000"><rect x="564.5" y="747" width="4.2" height="4"/><rect x="570" y="747" width="4.2" height="4"/><rect x="564.5" y="752" width="4.2" height="4"/><rect x="570" y="752" width="4.2" height="4"/></g>
<!-- folder -->
<path d="M608 739 L616 739 L618 741 L629 741 L629 757 L608 757 Z" fill="#f0c850"/>
<rect x="608" y="744" width="21" height="13" fill="#fcd86a"/>
<path d="M613 757 L613 751 L624 751 L624 757 L621 757 L621 754 L616 754 L616 757 Z" fill="#26a0e8"/>
<!-- colorful ball -->
<g transform="translate(667.5 748)">
 <path d="M-11 -1 C-11 -7 -7 -11 -2 -11 L0 -1 Z" fill="#f05a28"/>
 <path d="M-2 -11 C3 -12 7 -10 9 -7 L0 -1 Z" fill="#f8b800"/>
 <path d="M-11 -1 L0 -1 L-5 10 C-9 8 -11 4 -11 -1 Z" fill="#f0d000"/>
 <path d="M0 -1 L9 -7 C11 -3 11 2 9 6 Z" fill="#88c820"/>
 <path d="M-5 10 L0 -1 L5 10 C2 11.5 -2 11.5 -5 10 Z" fill="#40b030"/>
 <path d="M0 -1 L9 6 C8 8 7 9.5 5 10 Z" fill="#2a90e0"/>
 <path d="M3 -11 C6 -12 9 -10 10.5 -7" stroke="#b040d0" stroke-width="2.5" fill="none"/>
</g>
<!-- 360 e -->
<circle cx="716.8" cy="748" r="10.5" fill="url(#e360)" stroke="#e8f8e0" stroke-width="1"/>
<path d="M711 748.5 L722.5 748.5 C722.5 744.5 720 742.5 716.8 742.5 C713.5 742.5 711 745 711 748.5 C711 752 713.5 754.5 717 754.5 C719.5 754.5 721 753.5 722 752" stroke="#fff" stroke-width="2.2" fill="none"/>
<path d="M707 755 C712 752 722 742 727 737" stroke="#50b020" stroke-width="1" fill="none"/>
<!-- word -->
<rect x="754.7" y="737.3" width="21.5" height="21" fill="#2050b0"/>
<rect x="756.2" y="738.8" width="18.5" height="18" fill="#e8eef8"/>
<text x="757" y="755" font-family="Liberation Sans" font-weight="bold" font-style="italic" font-size="15" fill="#2050b0">W</text>
<!-- 3DOne active -->
<rect x="790.9" y="728" width="48" height="40" fill="#333333"/>
<rect x="802.7" y="736" width="24.3" height="23.6" rx="2.5" fill="#4cae4c"/>
<path d="M806 749.5 L824 740.5 L817 756 L813.5 752 Z" fill="#fff"/>
<path d="M806 749.5 L824 740.5 L811 751 Z" fill="#e6f0e6"/>
<path d="M811 751 L824 740.5 L813.5 752 L813 756 Z" fill="#b8d0c0"/>
<rect x="697" y="766" width="40" height="2" fill="#8ae0c6"/>
<rect x="746" y="766" width="40" height="2" fill="#8ae0c6"/>
<rect x="791" y="766" width="48" height="2" fill="#8ae0c6"/>
<!-- tray -->
<path d="M1066.5 752 L1072 746.5 L1077.5 752" stroke="#fff" stroke-width="1.3" fill="none"/>
<g transform="translate(1096 749)">
 <ellipse cx="-2" cy="-3" rx="4.5" ry="5" fill="#222"/><ellipse cx="-2" cy="-1.5" rx="3" ry="3" fill="#fff"/>
 <path d="M-6 2 C-6 7 2 7 2 2 Z" fill="#f8c000"/>
 <rect x="0" y="-2" width="8" height="7" fill="#f0b020"/><rect x="0.8" y="-1" width="6.4" height="5" fill="#f8d880"/>
 <path d="M-5 5 L-2 7 L1 5" fill="#e03020"/>
</g>
<circle cx="1120" cy="748" r="8" fill="#f8d820" stroke="#50a020" stroke-width="1.5"/>
<path d="M1116 748 L1124 748 M1120 744 L1120 752" stroke="#207010" stroke-width="2.2"/>
<rect x="1137.5" y="744" width="12.5" height="8" fill="none" stroke="#fff" stroke-width="1.2"/><rect x="1139.5" y="746" width="9" height="4" fill="#fff"/><rect x="1150.3" y="746.5" width="1.5" height="3" fill="#fff"/>
<g stroke="#fff" stroke-width="1.3" fill="none">
 <path d="M1163 755 A12 12 0 0 1 1175 743 M1166 755 A9 9 0 0 1 1175 746 M1169 755 A6 6 0 0 1 1175 749"/>
</g>
<rect x="1172" y="752" width="3" height="3" fill="#fff"/>
<path d="M1185 745.5 L1188 745.5 L1192 741.5 L1192 755.5 L1188 751.5 L1185 751.5 Z" fill="none" stroke="#fff" stroke-width="1.1"/>
<path d="M1194.5 745 C1196 747 1196 750 1194.5 752 M1197 743 C1199.5 746 1199.5 751 1197 754 M1199.5 741 C1203 745 1203 752 1199.5 756" stroke="#fff" stroke-width="1" fill="none"/>
<g stroke="#fff" stroke-width="1.1" fill="none">
 <rect x="1208.5" y="741" width="14" height="13"/><path d="M1211 744.5 L1220 744.5 M1211 747.5 L1220 747.5 M1211 750.5 L1215 750.5"/>
</g>
<circle cx="1220" cy="754" r="4" fill="#000" stroke="#fff" stroke-width="1"/><path d="M1218 754 L1222 754" stroke="#fff" stroke-width="1"/>
<text x="1239" y="754" text-anchor="middle" font-family="Liberation Sans" font-size="14" fill="#fff">中</text>
<g transform="translate(1268 748) rotate(-12)"><rect x="-7.5" y="-7.5" width="15" height="15" rx="2" fill="#e84e1c"/><text x="0" y="5" text-anchor="middle" font-family="Liberation Sans" font-weight="bold" font-style="italic" font-size="14" fill="#fff">S</text></g>
<text x="1323" y="743.5" text-anchor="middle" font-family="Liberation Sans" font-size="12.5" fill="#fff">17:29</text>
<text x="1322.5" y="761" text-anchor="middle" font-family="Liberation Sans" font-size="12.5" fill="#fff">2016/7/20</text>
<rect x="1361.5" y="728" width="1" height="40" fill="#6a6a6a"/>
</svg>

<svg class="abs" width="1366" height="768" viewBox="0 0 1366 768" style="pointer-events:none">
<rect x="1204.5" y="704" width="161.5" height="23.5" fill="#ffffff" stroke="#b8c8d8" stroke-width="1"/>
<g transform="translate(1194.5 714.5) rotate(-15)"><rect x="-10" y="-10" width="20" height="20" rx="2.5" fill="#ee5a24"/><text x="0.5" y="7" text-anchor="middle" font-family="Liberation Sans" font-weight="bold" font-style="italic" font-size="19" fill="#fff">S</text></g>
<g fill="#2a78d0">
 <path d="M1215.5 722.5 L1221.8 707.5 L1228 722.5 M1217.8 717.5 L1225.8 717.5" stroke="#2a78d0" stroke-width="2" fill="none"/>
 <path d="M1238.5 719.5 C1241 723 1247 723.5 1250 720 C1252.5 717 1252 712.5 1249.5 710 C1250 714.5 1247.5 718.5 1243 719.5 C1241.5 719.8 1240 719.8 1238.5 719.5 Z"/>
 <circle cx="1262.8" cy="712.5" r="1.7"/><path d="M1267.5 714 C1268.5 716 1268 719 1265.5 720.5 L1265 719.5 C1266 718.5 1266.5 717 1266 715 Z"/>
 <rect x="1280" y="710.5" width="15" height="11" rx="1.5" fill="none" stroke="#2a78d0" stroke-width="1.6"/>
 <path d="M1282.5 713.3 h10 M1282.5 716 h10 M1284 718.7 h7" stroke="#2a78d0" stroke-width="1.2" stroke-dasharray="1.3 0.8"/>
 <circle cx="1310" cy="710" r="3.2"/><path d="M1304 722 C1304 716 1306 714.5 1310 714.5 C1313 714.5 1315 716 1315 719 L1315 722 Z"/>
 <rect x="1312" y="716.5" width="6" height="6" fill="#fff"/><text x="1315" y="722.5" text-anchor="middle" font-family="Liberation Sans" font-size="6" fill="#2a78d0">11</text>
 <path d="M1325.5 710.5 L1329.5 709 C1330.5 710.5 1333 710.5 1334 709 L1338 710.5 L1339 715 L1336.5 715.5 L1336.5 722 L1327.5 722 L1327.5 715.5 L1325 715 Z"/>
 <path d="M1347 721.5 L1353.5 715 C1355.5 716 1358 715.5 1359.5 713.5 C1360.5 712 1360.5 710.5 1360 709.5 L1357.5 712 L1355.5 711 L1355.5 709 L1357.5 707 C1355.5 706.5 1353.5 707.5 1352.5 709 C1351.5 710.5 1351.5 712 1352 713 L1345.5 719.5 Z"/>
</g>
</svg>
</body></html>
